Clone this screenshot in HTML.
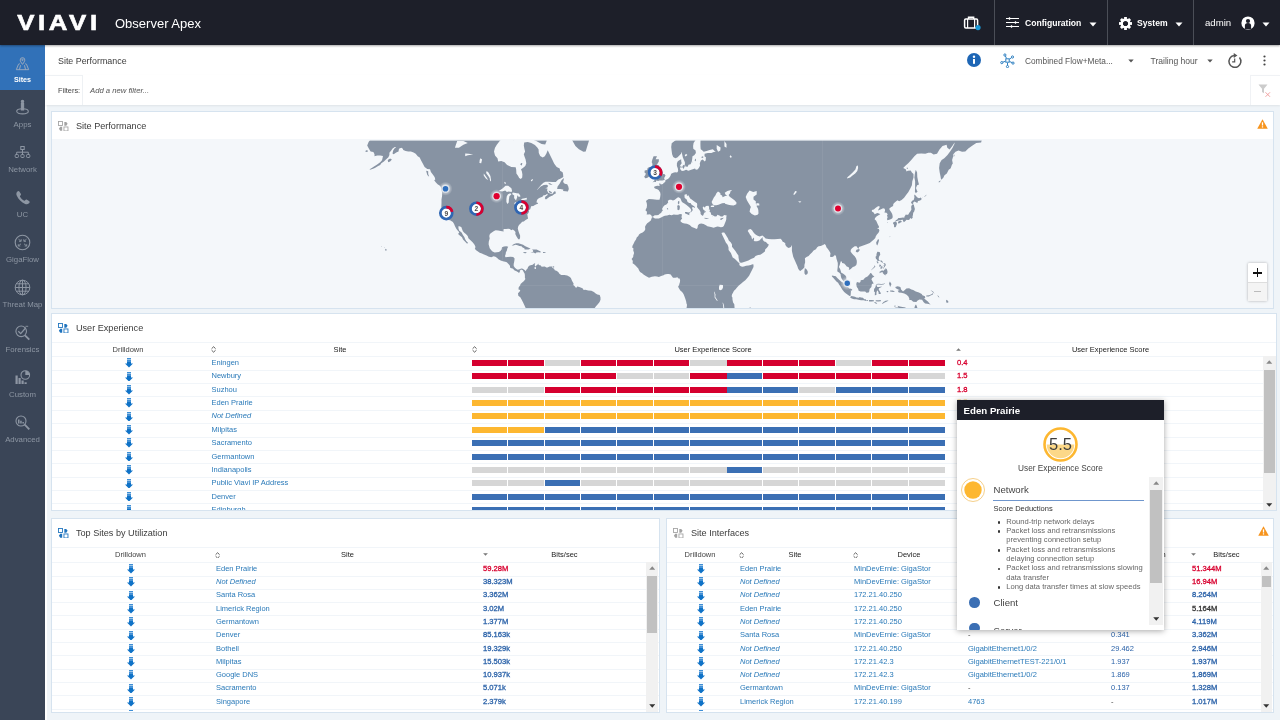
<!DOCTYPE html>
<html lang="en"><head><meta charset="utf-8"><title>Observer Apex - Site Performance</title>
<style>
*{box-sizing:border-box}
html,body{margin:0;padding:0}
body{width:1280px;height:720px;overflow:hidden;position:relative;background:#eff4f8;font-family:"Liberation Sans",Arial,sans-serif;font-size:7.5px;color:#444;-webkit-font-smoothing:antialiased}
.abs,.t{position:absolute;white-space:nowrap}
.t{line-height:10px;margin-top:-5px}
#hdr,#side,#tbar,#fbar,.panel,.tip{will-change:transform}
#hdr{position:absolute;left:0;top:0;width:1280px;height:45px;background:#1d1f29;box-shadow:0 1px 2px rgba(0,0,0,.35);z-index:5;color:#fff}
#hdr .sep{position:absolute;top:0;width:1px;height:45px;background:#4b4e57}
#hdr .m{font-size:8.6px;font-weight:700;color:#fff}
#side{position:absolute;left:0;top:45px;width:45px;height:675px;background:#3a4557}
#side .it{position:absolute;left:0;width:45px;height:45px;color:#8d96a3;font-size:7.8px;text-align:center}
#side .it.on{background:#3171b8;color:#fff;font-weight:700;font-size:7.200px}
#side .it span{position:absolute;left:-10px;width:65px;top:29.800px;line-height:10px;text-align:center}
#side .it svg{position:absolute;left:14px;top:9px}
#tbar{position:absolute;left:45px;top:45px;width:1235px;height:30px;background:#fff}
#fbar{position:absolute;left:45px;top:75px;width:1235px;height:30px;background:#fff;box-shadow:0 1px 2px rgba(0,0,0,.07)}
.panel{position:absolute;background:#fff;border:1px solid #d6e3ef;overflow:hidden}
.ptitle{position:absolute;left:24px;top:13.5px;font-size:9.1px;color:#3b3b3b;line-height:10px;margin-top:-5px;white-space:nowrap}
.picon{position:absolute;left:6px;top:8.5px}
.hline{position:absolute;left:0;right:0;height:1px;background:#f1f5f9}
.th{position:absolute;font-size:7.500px;color:#444;line-height:10px;margin-top:-4.800px;white-space:nowrap;transform:translateX(-50%)}
.panel .t{margin-top:-5.100px}
.lk{color:#2a7ab9}
.num{color:#2c63a9;font-weight:400;font-size:7.600px;-webkit-text-stroke:.300px currentColor}
.red{color:#d8002f}
.ar{position:absolute;left:-4px;top:-4.800px}
.ic{position:absolute;line-height:0}
.ic svg{display:block}
.sb{position:absolute;background:#f1f1f1}
.sb .sba{position:absolute;left:50%;margin-left:-3.2px}
.sb .sbt{position:absolute;left:1px;right:1px;background:#c1c1c1}
.bar{position:absolute;height:6px}
.bar i{position:absolute;top:0;height:6px}
</style></head><body>

<div id="hdr">
<svg class="abs" style="left:17px;top:13px" width="84" height="19" viewBox="0 0 84 19"><text transform="scale(1.2,1)" x="0.200" y="17" letter-spacing="3" font-family="Liberation Sans, Arial, sans-serif" font-weight="700" font-size="21.500" fill="#fff" stroke="#fff" stroke-width=".6">VIAVI</text></svg>
<div class="t" style="left:115px;top:23.5px;font-size:13px;color:#fff">Observer Apex</div>
<svg class="abs" style="left:963px;top:15px" width="19" height="17" viewBox="0 0 19 17"><rect x="1.6" y="4" width="13" height="9" rx="1.2" fill="none" stroke="#fff" stroke-width="1.5"/><path d="M5.5 4V2.2h5.2V4" fill="none" stroke="#fff" stroke-width="1.4"/><path d="M4.6 4v9M11.6 4v9" stroke="#fff" stroke-width="1.2"/><circle cx="15" cy="12.6" r="2.6" fill="#1a9ad9"/></svg>
<div class="sep" style="left:994px"></div>
<svg class="abs" style="left:1006px;top:16px" width="13" height="13" viewBox="0 0 13 13"><path d="M0 2.500h13M0 6.500h13M0 10.500h13" stroke="#fff" stroke-width="1.100"/><path d="M3.500 1.200v2.600M9.500 5.200v2.600M5.500 9.200v2.600" stroke="#fff" stroke-width="1.300"/></svg>
<div class="t m" style="left:1025px;top:23px">Configuration</div>
<svg class="abs" style="left:1089px;top:22px" width="8" height="5" viewBox="0 0 8 5"><path d="M.5.5h7L4 4.5z" fill="#fff"/></svg>
<div class="sep" style="left:1107px"></div>
<svg class="abs" style="left:1118.500px;top:16.500px" width="13" height="13" viewBox="-7 -7 14 14"><g fill="#fff"><rect x="-1.5" y="-7" width="3" height="4" transform="rotate(0)"/><rect x="-1.5" y="-7" width="3" height="4" transform="rotate(45)"/><rect x="-1.5" y="-7" width="3" height="4" transform="rotate(90)"/><rect x="-1.5" y="-7" width="3" height="4" transform="rotate(135)"/><rect x="-1.5" y="-7" width="3" height="4" transform="rotate(180)"/><rect x="-1.5" y="-7" width="3" height="4" transform="rotate(225)"/><rect x="-1.5" y="-7" width="3" height="4" transform="rotate(270)"/><rect x="-1.5" y="-7" width="3" height="4" transform="rotate(315)"/></g><circle r="4.1" fill="none" stroke="#fff" stroke-width="2.6"/></svg>
<div class="t m" style="left:1137px;top:23px">System</div>
<svg class="abs" style="left:1175px;top:22px" width="8" height="5" viewBox="0 0 8 5"><path d="M.5.5h7L4 4.5z" fill="#fff"/></svg>
<div class="sep" style="left:1193px"></div>
<div class="t m" style="left:1205px;top:23px;font-weight:400;font-size:9.600px">admin</div>
<svg class="abs" style="left:1241px;top:16px" width="14" height="14" viewBox="0 0 14 14"><circle cx="7" cy="7" r="6.6" fill="#fff"/><circle cx="7" cy="5" r="2.1" fill="#1d1f29"/><path d="M3.9 13V9.6a3.1 2.6 0 0 1 6.2 0V13z" fill="#1d1f29"/></svg>
<svg class="abs" style="left:1262px;top:22px" width="8" height="5" viewBox="0 0 8 5"><path d="M.5.5h7L4 4.5z" fill="#fff"/></svg>
</div>
<div class="abs" style="left:45px;top:105px;width:2px;height:615px;background:#fff"></div>
<div id="side">
<div class="it on" style="top:0px"><svg width="15" height="15" viewBox="0 0 17 17" style="left:15px;top:10.500px" fill="none" stroke="#9ba9bd" stroke-width="1.1"><path d="M8.5 9.5C6.8 7.2 5.9 5.8 5.9 4.5a2.6 2.6 0 0 1 5.2 0c0 1.300-.9 2.700-2.600 5z"/><circle cx="8.5" cy="4.400" r=".8"/><path d="M5.5 8.800 4 9.300 1.500 15.500h14L13 9.300l-1.500-.5M6.300 10.500l-1.300 5M10.700 10.500l1.300 5"/></svg><span>Sites</span></div>
<div class="it" style="top:45px"><svg width="17" height="17" viewBox="0 0 17 17" fill="none" stroke="#8d96a3" stroke-width="1.1"><circle cx="8.500" cy="2.600" r="1.200" fill="#8d96a3"/><path d="M7.400 4.600h2.200v6.400H7.400z" fill="#8d96a3"/><ellipse cx="8.500" cy="12.300" rx="5.800" ry="2.600"/></svg><span>Apps</span></div>
<div class="it" style="top:90px"><svg width="17" height="17" viewBox="0 0 17 17" fill="none" stroke="#8d96a3" stroke-width="1"><rect x="6.800" y="2.500" width="3.400" height="3"/><path d="M8.500 5.500v2.700M2.700 10.500V8.200h11.600v2.300M8.500 8.200v2.300"/><rect x="1.200" y="10.500" width="3.200" height="3" rx=".8"/><rect x="6.900" y="10.500" width="3.200" height="3" rx=".8"/><rect x="12.600" y="10.500" width="3.200" height="3" rx=".8"/></svg><span>Network</span></div>
<div class="it" style="top:135px"><svg width="17" height="17" viewBox="0 0 17 17"><path d="M3.200 2.800c.8-.9 1.700-1 2.300-.1l1.300 2c.4.700.2 1.300-.4 1.800-.5.400-.6.800-.2 1.500.9 1.500 2 2.600 3.600 3.500.6.300 1 .2 1.400-.3.500-.6 1.100-.8 1.800-.4l2 1.200c.9.600.9 1.500 0 2.300-1.100 1-2.400 1.200-3.900.6C7.500 13.400 4.300 10.300 2.700 6.600 2.100 5.100 2.300 3.800 3.200 2.800z" fill="#8d96a3"/></svg><span>UC</span></div>
<div class="it" style="top:180px"><svg width="17" height="17" viewBox="0 0 17 17" fill="none" stroke="#8d96a3" stroke-width="1.1"><circle cx="8.500" cy="8.500" r="7.300"/><path d="M4.500 5.200 7 7.200M12.500 5.200 10 7.200M4.500 11.800 7 9.800M12.500 11.800 10 9.800M5 7.300h2.200V5.200M12 7.300H9.800V5.200M4.300 10.200v1.800h2M12.700 10.200v1.800h-2" stroke-width=".9"/></svg><span>GigaFlow</span></div>
<div class="it" style="top:225px"><svg width="17" height="17" viewBox="0 0 17 17" fill="none" stroke="#8d96a3" stroke-width="1"><circle cx="8.500" cy="8.500" r="7.300"/><ellipse cx="8.500" cy="8.500" rx="3.600" ry="7.300"/><path d="M8.500 1.200v14.600M1.200 8.500h14.600M2.300 4.800h12.400M2.300 12.200h12.400"/></svg><span>Threat Map</span></div>
<div class="it" style="top:270px"><svg width="17" height="17" viewBox="0 0 17 17" fill="none" stroke="#8d96a3" stroke-width="1.1"><circle cx="7.200" cy="7.300" r="5.300"/><path d="M4.300 7.300 6.700 9.600 11.800 3.800" stroke-width="1.300"/><path d="M11 11.300 15.300 15.600" stroke-width="1.800"/><path d="M11.500 2.300h2.700" stroke-width=".9"/></svg><span>Forensics</span></div>
<div class="it" style="top:315px"><svg width="17" height="17" viewBox="0 0 17 17"><g fill="#8d96a3"><rect x="1.500" y="6.500" width="2.200" height="8.500"/><rect x="4.500" y="9" width="2.200" height="6"/><rect x="7.500" y="11.500" width="2.200" height="3.500"/><rect x="10.500" y="13.300" width="2.200" height="1.700"/></g><circle cx="11.300" cy="6" r="4.300" fill="none" stroke="#8d96a3" stroke-width="1.100"/><path d="M11.300 6V1.700A4.300 4.300 0 0 1 15.600 6z" fill="#8d96a3"/></svg><span>Custom</span></div>
<div class="it" style="top:360px"><svg width="17" height="17" viewBox="0 0 17 17" fill="none" stroke="#8d96a3" stroke-width="1.100"><circle cx="7" cy="7" r="5"/><path d="M10.700 10.700 15.300 15.300" stroke-width="1.900"/><path d="M4 9.500V5.500h1.500v4zM6.200 9.500V6.800h1.500v2.700zM8.400 9.500V8h1.500v1.500z" fill="#8d96a3" stroke="none"/></svg><span>Advanced</span></div>
</div>
<div id="tbar"><div class="t" style="left:13px;top:15.500px;font-size:8.900px;color:#3b3b3b">Site Performance</div>
<svg class="abs" style="left:922px;top:8px" width="14" height="14" viewBox="0 0 14 14"><circle cx="7" cy="7" r="7" fill="#1e66b5"/><rect x="6" y="6" width="2" height="4.800" fill="#fff"/><circle cx="7" cy="3.800" r="1.200" fill="#fff"/></svg>
<svg class="abs" style="left:955px;top:8px" width="15" height="15" viewBox="-7.500 -7.500 15 15" fill="none" stroke="#2d7fc1" stroke-width="1"><rect x="-1.700" y="-1.700" width="3.400" height="3.400"/><path d="M-1.0 -2.1L-2.1 -4.5"/><circle cx="-2.6" cy="-5.5" r="1.100"/><path d="M1.9 -1.3L4.1 -2.9"/><circle cx="5.0" cy="-3.5" r="1.100"/><path d="M2.1 1.0L4.5 2.1"/><circle cx="5.5" cy="2.6" r="1.100"/><path d="M0.0 2.3L0.0 5.0"/><circle cx="0.0" cy="6.1" r="1.100"/><path d="M-2.2 0.8L-4.7 1.7"/><circle cx="-5.7" cy="2.1" r="1.100"/></svg>
<div class="t" style="left:980px;top:15.500px;font-size:8.300px;color:#555">Combined Flow+Meta...</div>
<svg class="abs" style="left:1083px;top:14px" width="6" height="4" viewBox="0 0 6 4"><path d="M.3.500h5.400L3 3.500z" fill="#555"/></svg>
<div class="t" style="left:1105.500px;top:15.500px;font-size:8.550px;color:#555">Trailing hour</div>
<svg class="abs" style="left:1162px;top:14px" width="6" height="4" viewBox="0 0 6 4"><path d="M.3.500h5.400L3 3.500z" fill="#555"/></svg>
<svg class="abs" style="left:1181.800px;top:6.500px" width="16" height="17" viewBox="0 0 15 16" fill="none" stroke="#555" stroke-width="1.400"><path d="M11.700 5.200A5.600 5.600 0 1 1 6.500 3.300"/><path d="M6.300 1 9.800 3.300 6.300 5.700z" fill="#555" stroke="none"/><path d="M7.200 6v3.300H4.800" stroke-width="1.100"/></svg>
<svg class="abs" style="left:1218px;top:10px" width="3" height="11" viewBox="0 0 3 11"><circle cx="1.500" cy="1.500" r="1.100" fill="#444"/><circle cx="1.500" cy="5.500" r="1.100" fill="#444"/><circle cx="1.500" cy="9.500" r="1.100" fill="#444"/></svg>
</div>
<div id="fbar"><div class="abs" style="left:0;top:0;width:38px;height:30px;border-right:1px solid #eef1f4;border-top:1px solid #eef1f4"></div>
<div class="t" style="left:13px;top:15.600px;font-size:7.400px;color:#444">Filters:</div>
<div class="t" style="left:45px;top:15.600px;font-size:7.700px;color:#555;font-style:italic">Add a new filter...</div>
<div class="abs" style="left:1205px;top:0;width:30px;height:30px;border-left:1px solid #f0f2f5;border-top:1px solid #f0f2f5"></div>
<svg class="abs" style="left:1213px;top:9px" width="16" height="15" viewBox="0 0 16 15"><path d="M.5.500h9L6 4.800v4.500L4 8V4.800z" fill="#ccc"/><path d="M7.500 8.300 12 12.800M12 8.300 7.500 12.800" stroke="#f19a9a" stroke-width=".9"/></svg>
</div>
<div class="panel" style="left:51px;top:111px;width:1223px;height:198px">
<span class="picon"><svg viewBox="0 0 12 12" width="10.5" height="10.5"><rect x=".6" y=".6" width="4.6" height="4.6" fill="none" stroke="#a3a3a3" stroke-width="1"/><rect x="6.8" y="6.8" width="4.6" height="4.6" fill="none" stroke="#a3a3a3" stroke-width="1"/><path d="M7.2 1h2.2L11 3.2 9.4 5.4H7.2z" fill="#a3a3a3"/><path d="M4.8 6.6H2.6L1 8.8l1.6 2.2h2.2z" fill="#a3a3a3"/></svg></span><div class="ptitle">Site Performance</div>
<span class="ic" style="left:1205px;top:7px"><svg viewBox="0 0 12 11" width="11" height="10"><path d="M6 .3 11.8 10.6H.2z" fill="#f7941d"/><rect x="5.3" y="3.6" width="1.4" height="3.6" fill="#fff"/><rect x="5.3" y="8" width="1.4" height="1.4" fill="#fff"/></svg></span>
<div class="abs" style="left:0;top:27px;width:1221px;height:169px;background:#f4f7fa" id="map">
<svg class="abs" style="left:0;top:1px" width="1221" height="168" viewBox="0 0 1221 168"><path d="M315.4 -21.3L315.4 -5.9L317.5 -1.8L317.9 0.2L316.6 2.1L315.2 5.5L316.8 8.5L318.6 11.4L321.4 12.1L322.5 14.2L322.5 16.2L325.2 15.5L328.2 15.5L331.0 15.9L330.5 18.3L330.0 20.3L328.2 22.2L324.8 24.8L322.0 26.4L319.8 27.9L317.7 29.2L317.9 29.8L320.4 28.9L322.9 27.9L326.1 26.1L328.2 25.1L329.3 23.2L331.9 21.6L334.2 19.3L336.4 17.3L337.4 14.9L337.4 12.8L339.2 10.6L340.6 8.5L342.8 7.0L344.2 7.4L342.4 8.5L341.2 10.6L340.5 13.5L341.7 14.2L344.2 12.4L346.5 11.4L347.0 8.8L349.2 7.7L350.6 8.5L351.3 9.9L353.6 11.0L356.3 11.4L358.9 11.4L361.6 12.4L363.7 13.8L365.7 16.2L367.7 17.6L369.1 20.6L370.9 23.8L372.6 27.0L375.3 28.9L378.0 29.2L378.9 31.9L380.8 34.6L382.6 36.9L383.3 39.5L382.2 40.3L383.7 42.3L385.6 44.2L387.9 45.8L388.8 46.9L389.3 49.3L390.1 52.4L390.1 55.7L389.5 59.4L389.5 63.1L389.3 66.9L390.4 69.4L391.7 71.7L392.7 73.0L393.6 75.1L394.5 76.8L395.7 78.6L396.1 80.1L398.1 80.3L399.7 81.2L400.9 82.0L402.1 83.9L403.0 86.2L404.3 88.7L405.7 90.6L407.3 92.2L406.1 94.0L407.8 95.6L410.0 97.2L411.0 99.6L412.5 101.1L414.4 102.9L415.1 103.7L416.0 102.7L414.2 101.1L413.2 99.2L412.3 97.0L410.9 95.0L409.6 92.6L407.1 90.4L406.4 87.9L406.6 86.0L409.3 86.9L410.0 89.1L410.9 91.2L412.5 93.0L413.9 94.0L415.7 96.0L416.4 98.2L418.5 100.2L420.6 102.3L422.2 104.2L423.3 106.2L423.3 107.9L422.8 108.6L423.8 110.1L425.6 111.3L427.7 112.8L429.9 113.5L432.0 114.6L434.5 115.6L437.0 116.7L439.3 117.2L441.6 116.3L443.4 116.7L445.2 118.0L446.4 119.3L448.7 120.5L450.9 121.3L453.2 121.8L454.8 122.2L456.0 123.5L457.4 124.9L458.0 126.0L458.0 127.5L459.4 128.2L460.6 128.5L461.7 129.4L462.6 130.5L464.0 131.1L465.4 131.8L466.7 132.7L468.1 132.1L467.6 130.9L469.0 129.6L470.8 130.3L471.3 131.2L471.8 132.3L472.7 133.7L472.9 135.5L472.9 137.8L473.4 138.9L472.0 140.9L470.2 142.5L468.6 143.9L468.1 145.5L466.7 147.3L466.5 149.4L468.3 149.9L467.7 151.5L466.0 153.2L466.3 155.8L468.3 157.3L469.7 159.8L471.1 162.5L472.4 165.2L473.4 167.4L474.9 170.3L478.9 174.3L485.7 181.8L539.4 181.8L540.3 178.0L541.2 174.3L541.2 171.6L542.1 168.8L543.8 166.6L545.8 164.3L547.6 161.9L548.5 159.8L548.5 157.6L547.7 154.9L545.4 154.4L543.7 153.5L541.9 152.1L539.4 150.7L536.2 150.5L533.3 149.8L531.7 150.1L530.5 148.3L527.3 147.1L525.2 146.6L524.1 148.0L522.5 146.0L521.3 145.0L521.6 143.4L520.7 142.1L519.8 140.2L518.9 138.0L517.5 136.8L515.2 135.5L512.4 135.0L509.2 135.0L507.4 133.7L506.3 131.9L504.4 130.7L502.8 130.2L502.1 128.7L499.9 127.6L500.5 126.4L497.6 126.5L495.5 127.5L494.4 127.5L492.8 126.5L489.6 126.7L488.9 125.5L486.8 124.9L486.1 123.6L485.5 124.7L484.3 125.6L483.2 126.5L482.7 125.1L483.2 123.3L482.1 123.6L480.7 124.7L478.6 125.3L477.2 125.8L476.1 127.1L475.4 128.7L474.1 130.0L474.0 131.2L472.9 130.2L470.8 128.7L469.2 128.4L467.6 129.3L465.8 129.8L464.4 129.1L462.9 127.8L461.7 126.0L461.7 124.0L462.1 122.2L462.4 120.4L462.6 118.5L461.2 117.0L458.5 116.7L455.8 117.0L453.5 117.2L453.0 116.1L453.7 114.1L453.9 112.2L454.8 110.7L455.3 108.6L456.2 106.7L454.4 106.2L451.9 106.5L450.0 107.3L449.6 109.4L448.4 111.1L446.9 112.0L444.8 112.2L442.7 112.6L440.5 111.6L439.5 110.5L437.7 108.3L437.2 106.2L436.6 104.2L436.8 101.5L437.7 98.6L437.3 96.0L437.9 94.0L439.8 92.4L442.0 91.0L443.7 90.2L446.2 90.4L448.7 91.0L450.1 91.2L451.7 91.6L451.4 90.2L451.7 88.9L454.1 88.9L456.2 88.7L458.0 89.1L459.0 90.2L460.8 89.5L462.2 90.4L463.5 92.0L463.3 94.0L464.4 96.2L465.3 97.8L466.3 99.2L467.6 99.2L468.1 97.6L468.1 95.6L467.2 93.2L466.5 91.2L465.8 88.7L466.1 86.7L467.0 85.0L468.6 83.5L470.2 81.8L471.8 81.4L473.6 79.9L474.9 79.2L476.1 78.4L475.7 76.8L475.4 74.8L474.9 73.5L475.6 74.2L477.0 71.7L476.8 70.1L478.2 69.2L478.9 67.1L479.1 66.2L481.3 65.9L482.5 65.2L483.4 64.7L485.0 64.0L486.1 63.8L485.7 62.8L484.5 62.4L484.8 60.7L485.7 59.0L487.8 57.7L490.5 56.7L491.2 55.5L493.5 55.0L495.3 53.7L495.7 55.0L493.5 56.5L492.8 58.2L493.9 59.4L496.0 58.0L497.6 56.7L500.6 55.5L502.1 54.2L504.0 53.2L503.1 50.9L501.7 51.9L500.6 53.7L498.5 53.7L496.2 52.7L495.1 50.6L495.5 48.5L493.2 48.2L495.3 47.4L496.2 45.8L494.6 44.7L491.7 45.0L488.7 46.4L486.6 48.5L484.8 50.6L485.5 49.3L487.1 47.2L489.3 44.7L491.4 42.8L493.5 41.7L496.7 41.7L500.3 42.0L503.8 42.0L506.0 39.8L509.2 38.3L511.3 36.9L511.1 34.3L510.6 32.2L508.1 30.7L507.7 28.5L504.7 27.0L502.1 23.5L500.6 20.3L499.0 16.9L497.3 13.5L495.7 10.3L494.4 13.5L492.8 16.2L490.7 17.6L488.2 15.9L486.8 13.1L486.6 9.6L485.3 7.4L482.9 5.1L479.3 2.9L475.7 2.1L472.2 2.5L471.8 5.5L472.4 8.8L473.1 11.4L471.8 14.2L472.5 16.6L473.6 19.6L474.3 23.2L473.3 26.1L470.9 27.9L469.0 29.2L469.9 31.6L470.4 34.6L470.2 37.5L468.8 38.9L467.2 38.1L466.0 35.7L464.4 33.4L464.2 29.8L463.7 27.3L459.4 27.0L455.1 25.1L452.6 22.2L449.3 20.9L446.2 21.6L445.5 18.3L443.0 15.5L442.0 11.4L443.0 7.7L444.8 4.8L446.9 2.1L449.4 -1.0L452.3 -3.8L454.1 -21.3ZM511.8 38.1L509.5 40.3L507.6 43.7L505.6 46.6L505.1 49.0L508.3 49.0L511.3 49.6L511.1 51.1L515.9 51.4L516.8 49.0L516.3 46.4L515.2 44.2L512.7 43.7L511.1 42.0L511.7 39.8ZM518.1 -21.3L517.7 -7.9L520.2 0.2L523.4 5.9L526.9 9.2L531.4 11.7L533.7 11.4L534.8 7.7L537.1 0.2L539.4 -7.9L548.3 -21.3ZM459.6 105.6L462.1 104.0L464.2 103.3L466.5 103.3L468.8 104.0L471.1 104.8L472.9 106.0L475.0 106.9L477.2 107.9L478.6 108.8L476.3 109.4L472.7 109.4L472.2 108.1L470.9 107.7L469.5 106.3L467.4 106.0L465.6 105.2L463.3 104.8L461.5 105.4ZM480.0 109.6L482.5 109.4L484.6 109.6L486.6 110.5L488.7 111.5L488.5 112.6L486.4 112.2L484.3 112.6L483.4 113.5L481.6 112.6L478.4 112.4L481.1 111.8L481.1 110.5ZM471.3 112.2L473.3 112.0L474.9 112.8L473.6 113.3L471.5 113.0ZM491.0 112.0L493.7 112.2L493.3 113.0L491.0 113.0ZM501.0 126.2L502.2 126.4L502.1 127.5L500.6 127.5ZM333.3 108.8L334.9 109.8L333.9 111.1L333.2 110.1ZM329.3 106.0L330.1 106.7L329.4 106.7ZM332.1 107.5L333.2 107.7L332.5 108.1ZM338.1 18.6L339.9 19.6L338.1 21.6L336.2 22.2L335.7 19.9ZM314.0 10.3L315.9 10.6L315.4 12.1L313.3 11.7ZM305.6 -2.6L310.1 -1.4L309.2 -0.2L305.6 -0.6ZM374.1 30.7L376.2 31.3L376.2 34.0L377.4 36.9L375.3 34.9ZM471.8 -21.3L471.8 -5.9L474.5 -3.8L478.9 -1.0L484.3 0.9L489.6 4.0L493.2 4.4L494.6 0.9L494.9 -3.0L496.7 -7.9L498.5 -21.3ZM455.8 -7.9L455.8 -3.8L457.6 -1.0L461.2 0.2L464.7 -1.4L466.5 -5.9L461.2 -10.1ZM496.0 42.8L498.5 43.4L500.6 45.0L497.6 44.5ZM496.7 50.6L500.1 52.2L499.2 53.2L497.1 52.2ZM469.0 22.9L470.4 23.2L469.7 25.4L468.3 24.8ZM649.6 -21.3L650.5 -10.9L654.1 -10.9L655.5 -7.9L653.2 -5.0L650.5 -2.2L648.5 0.2L648.4 4.0L648.5 7.0L648.7 9.2L650.1 10.3L651.7 11.7L654.6 11.0L657.6 9.9L660.8 9.2L663.1 11.4L664.2 11.7L661.7 12.1L659.4 13.1L655.8 13.1L652.6 13.8L652.5 16.2L653.9 17.3L653.7 20.3L652.8 21.6L650.7 19.6L648.9 20.6L647.8 23.2L648.0 25.7L646.8 27.9L645.5 29.5L643.9 29.8L643.0 28.5L640.0 29.5L636.3 30.7L634.1 29.8L631.8 30.7L629.9 31.0L628.6 29.8L628.1 28.5L627.9 26.1L628.8 24.5L629.7 23.2L629.2 21.2L629.2 19.3L627.7 19.9L625.8 21.2L624.9 23.2L624.9 26.1L625.8 28.2L626.1 30.1L626.1 31.3L625.1 32.5L623.1 32.2L621.2 32.8L619.2 33.7L618.5 35.7L617.6 37.2L616.5 38.6L614.9 39.5L613.5 40.0L613.2 42.0L611.9 42.8L610.9 43.9L608.9 44.5L608.2 43.4L607.1 43.4L607.7 46.1L605.2 45.8L602.5 46.4L602.1 47.4L603.0 48.5L605.3 49.3L606.6 50.1L608.2 52.4L608.5 54.5L608.2 57.0L607.5 59.7L604.8 59.7L600.7 59.2L596.8 59.0L595.2 59.9L594.0 60.9L594.7 63.1L595.0 65.2L594.7 67.8L593.8 69.2L593.6 70.8L594.9 71.5L594.9 73.5L594.6 74.6L596.3 74.6L597.5 74.2L599.1 75.1L599.8 76.4L600.5 76.8L601.1 76.4L602.7 75.3L604.5 75.3L606.4 75.1L608.0 73.5L609.1 73.0L609.8 71.5L610.9 70.6L610.0 68.9L611.4 66.6L612.6 65.2L614.4 64.5L616.2 62.6L615.8 60.7L617.6 59.7L619.2 59.7L621.0 60.4L622.8 59.7L624.0 58.7L625.6 57.5L626.5 57.2L628.3 58.2L629.0 59.7L629.5 61.2L630.6 62.4L632.4 63.6L634.5 65.0L635.7 65.9L637.2 67.3L638.6 68.7L639.3 70.3L638.4 71.9L638.9 72.6L640.0 71.0L640.9 70.1L640.2 68.7L640.4 67.1L641.1 66.9L642.5 67.8L643.2 68.3L642.5 66.4L640.5 65.2L638.9 64.0L639.1 63.3L637.3 63.1L635.6 61.9L634.7 59.4L632.7 58.0L632.5 56.0L632.5 54.7L634.7 54.0L634.7 55.0L635.2 56.2L636.1 55.0L637.2 56.7L638.2 58.5L639.7 59.4L641.3 60.7L643.0 61.9L645.0 63.3L645.2 64.7L645.0 66.9L646.1 68.5L647.5 70.1L648.2 71.5L648.7 71.9L648.4 73.0L648.9 74.6L649.6 75.1L650.5 75.9L651.2 74.8L651.6 75.7L651.6 73.9L652.1 73.3L652.6 72.6L653.3 72.1L652.1 70.8L651.7 70.1L651.2 69.2L650.7 67.8L651.2 66.4L652.6 67.3L652.8 68.0L653.2 66.9L653.9 65.9L656.4 65.7L656.9 66.4L657.1 67.6L657.1 68.9L658.1 70.1L657.4 71.5L658.9 72.8L659.0 74.6L660.6 75.3L662.9 76.4L664.7 76.2L665.3 74.8L667.4 75.5L668.8 76.6L670.6 76.4L672.2 75.1L674.7 75.5L674.3 77.0L674.3 79.0L674.0 80.5L673.1 82.7L672.5 84.3L671.8 86.0L670.6 87.1L668.8 87.3L667.0 86.7L665.4 86.4L663.7 87.1L661.7 87.7L659.0 86.9L655.3 86.2L654.4 85.4L651.6 84.1L649.1 83.5L647.1 84.1L645.9 85.6L645.5 87.9L644.6 88.9L642.5 87.9L639.8 86.9L637.7 85.0L634.9 83.7L632.7 83.5L630.6 82.9L628.6 81.6L628.6 80.3L630.2 78.6L629.5 77.3L629.7 75.7L630.1 74.4L628.1 73.9L626.0 74.8L623.8 74.8L621.7 74.6L619.6 75.3L617.4 74.8L615.1 75.5L612.8 75.7L611.0 76.6L609.1 77.5L606.9 78.6L605.2 78.4L602.9 78.6L601.0 77.3L600.0 77.3L599.5 78.6L598.8 80.5L597.0 82.0L595.2 83.3L594.1 84.8L593.1 86.4L593.1 88.3L593.4 89.1L592.4 91.0L590.6 92.4L588.3 93.6L587.0 94.4L586.3 96.0L584.7 97.4L584.0 99.6L582.6 101.5L581.7 103.5L580.5 105.8L580.2 107.5L581.5 108.4L581.2 110.3L582.1 113.0L581.3 115.4L581.2 117.0L579.6 118.9L580.6 120.4L580.8 121.5L580.6 123.3L582.1 124.2L583.5 125.6L585.1 127.3L586.3 128.5L587.0 130.3L588.1 131.9L590.1 133.2L591.5 134.5L593.8 136.1L597.0 137.7L599.8 136.8L603.0 136.2L605.0 136.4L606.9 137.0L609.1 136.1L611.6 135.2L612.6 134.6L615.1 134.1L616.9 134.1L618.7 134.6L619.7 136.1L621.0 137.8L623.3 137.7L625.4 137.3L626.5 138.4L627.6 138.6L628.1 140.3L627.9 142.3L627.4 143.7L627.2 144.8L626.1 146.7L627.2 148.7L628.3 150.5L630.1 152.1L631.5 154.0L632.4 156.2L633.4 158.9L634.1 161.2L634.5 163.4L635.0 164.8L634.7 167.5L632.7 170.3L631.8 173.4L631.5 176.5L633.6 181.8L672.7 181.8L675.6 179.0L678.8 176.5L681.4 174.7L682.9 172.5L682.7 169.7L682.5 167.0L682.3 164.3L681.1 162.5L680.5 159.8L680.4 157.6L679.7 156.2L680.0 154.4L681.1 152.6L682.0 150.8L683.4 149.4L685.0 147.6L686.8 145.5L689.3 143.4L691.0 141.9L693.3 140.2L695.5 137.8L697.1 135.7L698.5 133.0L699.9 130.3L701.0 128.0L701.5 126.9L701.5 124.4L700.5 124.2L698.7 125.1L696.5 125.5L694.1 125.8L691.9 126.5L690.1 126.7L688.4 126.0L687.3 124.9L687.5 123.3L686.2 122.2L684.5 120.4L682.7 118.7L680.7 117.4L680.0 115.8L678.9 113.0L676.6 110.0L676.5 107.3L675.6 104.8L673.8 102.5L672.7 100.0L671.5 97.6L670.4 95.2L669.5 93.0L670.8 92.4L672.2 92.6L673.3 94.0L674.5 96.0L675.9 98.2L676.8 100.6L678.9 102.5L680.0 104.6L680.0 106.7L681.6 108.8L683.4 111.1L684.8 113.3L686.4 115.6L686.6 118.0L687.1 120.4L687.7 122.6L689.6 122.7L691.2 122.2L693.5 121.5L696.4 120.4L699.0 118.9L702.1 117.8L703.5 116.1L706.1 115.0L708.3 114.8L710.6 113.3L712.9 111.5L713.3 109.2L714.7 108.1L716.1 106.2L716.8 104.4L715.2 103.5L714.0 102.1L712.2 101.5L710.9 100.0L710.6 98.4L710.8 97.0L709.9 98.0L708.8 99.0L707.4 100.4L705.1 101.3L702.6 101.3L701.7 100.4L702.2 99.0L701.7 97.4L700.8 98.4L700.5 99.6L699.7 98.2L699.4 96.4L698.0 94.8L696.9 92.8L695.7 91.0L696.7 89.5L698.7 89.1L700.3 90.4L701.2 92.0L702.9 94.0L705.1 95.6L707.6 96.4L710.4 95.4L712.2 97.0L713.6 98.4L716.5 99.0L719.5 99.2L722.5 99.2L725.7 99.0L728.5 98.8L729.8 100.0L730.7 101.7L732.1 102.3L733.5 103.7L733.2 104.8L734.9 106.9L736.7 107.9L738.9 106.9L739.4 105.0L739.9 106.7L739.9 108.8L739.9 111.1L740.6 113.9L741.2 116.7L742.2 118.9L743.3 121.6L744.4 124.0L745.4 126.2L746.1 128.5L747.2 130.3L748.3 131.1L749.5 130.0L750.9 129.1L752.4 127.3L752.4 124.9L753.1 122.6L753.1 120.4L752.9 118.2L754.5 116.9L756.6 115.9L758.1 114.3L760.0 112.4L761.6 110.5L763.9 109.2L765.2 107.3L766.6 106.2L768.7 106.0L771.0 105.0L772.8 104.0L773.9 105.4L774.4 107.3L775.7 108.8L777.3 111.1L778.5 113.3L778.1 115.8L778.3 116.9L780.3 117.0L782.1 115.9L782.9 114.8L784.0 116.3L784.4 118.5L785.1 120.7L785.8 123.1L785.8 125.8L785.6 128.0L785.3 130.3L785.4 131.6L787.4 132.7L788.6 134.3L788.8 136.1L789.3 138.0L790.4 139.8L791.7 141.2L793.3 142.5L794.7 143.2L795.7 143.0L795.2 141.2L794.3 139.1L794.3 137.0L793.4 135.5L792.2 134.5L790.9 133.4L789.3 132.7L788.6 130.5L788.1 129.1L786.9 127.1L787.7 124.9L788.3 122.9L788.6 121.5L789.9 121.5L790.1 122.9L792.2 123.5L793.6 124.9L794.7 126.5L796.3 126.9L797.2 128.0L796.8 130.0L798.8 128.9L800.0 127.8L800.9 126.9L802.9 126.2L804.3 124.9L804.8 123.1L804.8 120.7L804.1 118.5L802.9 116.5L801.1 114.8L799.8 113.3L798.6 111.6L798.8 109.8L800.0 108.3L801.3 107.3L802.7 106.3L804.5 106.2L805.5 107.7L806.1 108.6L806.9 108.4L806.9 106.9L809.1 106.2L811.2 105.6L813.3 104.8L815.3 104.0L817.8 102.9L820.1 101.1L821.9 99.6L823.3 98.0L823.7 96.4L824.9 94.6L826.5 92.8L827.4 90.8L826.9 89.1L824.9 88.9L826.7 87.9L827.0 86.4L826.1 85.0L825.3 83.3L824.2 80.7L822.6 79.2L823.3 77.7L824.5 76.6L826.9 75.1L828.3 74.2L827.0 73.5L825.3 73.0L822.6 74.2L821.9 72.8L819.9 71.5L819.9 69.9L821.9 69.6L823.5 68.0L825.6 66.4L827.2 65.9L827.7 67.3L826.5 69.2L826.0 70.6L828.5 69.6L831.1 68.3L832.7 68.7L833.1 70.6L832.4 72.4L834.5 72.8L835.7 74.2L835.0 75.5L835.6 77.3L835.0 79.0L835.4 80.3L837.3 79.7L839.3 79.0L840.5 77.9L840.7 76.2L840.2 73.9L839.1 71.9L837.7 70.1L837.2 68.7L838.9 67.3L841.1 65.9L841.3 64.0L842.7 62.4L843.9 61.4L845.5 60.2L847.1 61.2L849.6 59.9L852.1 57.7L854.1 55.0L856.4 51.9L858.3 48.5L859.9 45.3L860.3 41.2L861.5 37.5L861.5 34.0L859.9 32.5L858.7 30.4L855.8 30.7L854.6 31.6L853.7 29.2L851.2 27.9L853.7 25.4L856.5 22.9L859.7 19.6L862.4 16.2L865.1 13.8L869.2 13.5L873.3 13.8L876.3 12.8L878.9 12.8L881.6 14.5L885.0 13.8L887.5 9.6L890.5 5.9L894.6 4.8L895.3 7.7L897.6 9.6L900.3 5.9L902.6 2.5L902.4 4.0L900.6 7.7L898.1 11.4L895.5 14.9L892.3 18.3L889.6 19.9L887.7 23.2L887.1 27.9L887.7 32.5L888.5 36.3L889.1 39.8L891.2 38.1L892.5 35.2L894.8 33.4L896.7 29.8L898.7 28.2L899.9 24.8L900.8 23.5L900.1 19.9L901.0 16.9L901.3 14.2L903.5 11.7L906.5 10.6L910.1 11.7L913.3 11.4L916.3 8.5L920.5 5.5L924.3 2.9L929.1 2.5L930.3 -1.8L930.5 -21.3ZM631.8 -21.3L630.1 -7.9L626.5 -1.8L622.6 0.9L619.7 3.3L619.2 7.0L619.6 10.6L620.1 14.2L621.2 16.9L623.3 18.3L625.3 17.6L627.6 15.2L629.0 13.8L629.5 11.7L630.1 14.2L630.8 17.3L631.7 19.6L632.9 22.2L632.9 24.2L633.4 26.4L635.7 26.7L636.5 24.8L638.6 24.2L639.8 21.6L640.2 18.9L640.5 16.2L642.3 15.2L643.9 13.1L643.6 10.6L641.3 8.8L641.1 5.9L641.6 2.9L643.4 0.2L646.9 -3.0L648.7 -7.9L649.6 -21.3ZM601.6 16.2L605.0 16.2L603.6 19.3L606.9 19.3L606.8 21.6L605.5 23.8L604.5 24.8L606.6 25.1L607.8 27.9L609.3 29.5L610.5 31.9L611.0 34.0L612.8 34.3L613.5 35.4L612.6 37.2L611.9 38.6L613.0 38.9L612.1 40.0L610.5 40.6L607.3 40.6L606.1 40.9L604.3 40.6L603.9 42.0L602.0 41.7L600.5 42.6L601.6 41.2L602.9 39.8L604.8 39.2L605.2 38.3L603.4 38.3L601.3 37.8L602.1 36.6L603.2 35.2L602.5 34.3L602.5 33.1L605.0 33.1L605.3 31.0L604.3 29.2L604.3 27.9L601.8 28.9L602.0 27.0L601.6 25.4L600.4 26.7L600.4 23.8L599.7 22.2L600.2 19.9L601.1 17.6ZM597.5 27.0L599.5 27.3L600.5 29.2L599.7 31.0L599.7 33.1L599.3 35.7L597.2 36.6L595.0 38.1L593.1 38.3L592.2 36.6L593.3 35.2L593.8 33.4L592.5 32.5L592.7 30.4L595.2 30.1L595.6 27.9ZM632.4 24.5L632.9 26.1L632.0 27.9L631.5 28.9L630.2 27.0L630.9 25.4ZM628.8 26.1L629.7 27.0L629.2 27.9L627.9 27.0ZM643.9 18.6L644.1 20.3L643.0 21.6L642.7 19.9ZM640.9 20.6L640.4 22.5L639.7 24.2ZM650.1 16.2L651.7 16.9L650.0 18.3L649.4 17.3ZM627.2 60.7L627.4 62.8L626.9 64.5L625.8 63.3L626.0 61.6ZM627.0 65.0L627.9 66.6L627.6 69.6L626.1 70.3L625.4 69.6L625.4 67.1L625.1 65.7ZM638.2 71.9L637.3 73.5L637.3 75.3L635.7 74.4L632.9 73.3L633.1 72.1L634.5 72.1L636.3 72.4ZM652.5 77.7L654.1 78.1L656.2 78.4L657.1 78.8L654.9 79.0L652.5 78.6ZM671.8 77.7L670.8 78.8L669.2 79.9L668.1 79.4L668.5 78.6L670.2 78.1ZM651.7 70.1L653.3 71.0L654.1 72.4L652.5 71.5ZM660.6 75.9L659.9 76.8L660.5 76.6ZM657.3 69.4L657.6 70.1L656.5 69.9ZM616.0 68.0L616.2 69.4L614.9 69.2L614.9 68.5ZM752.9 128.0L754.9 129.8L755.9 132.1L755.4 134.1L753.6 134.9L752.5 133.4L752.4 131.2L752.7 129.4ZM807.1 109.0L807.8 110.0L806.8 111.6L805.2 112.6L803.7 111.5L804.5 109.8L806.1 109.2ZM826.5 99.0L827.0 100.6L826.1 103.5L825.3 105.6L824.4 104.2L824.2 102.3L825.3 100.4L825.8 99.4ZM843.2 81.4L844.6 82.2L845.0 83.7L843.9 86.7L842.9 87.5L842.0 86.7L842.1 84.8L841.3 83.9L840.9 82.7L842.1 82.0ZM848.5 80.5L849.8 81.2L849.3 82.2L848.0 82.7L846.8 83.7L845.9 82.4L846.6 81.2ZM861.0 64.3L861.9 64.7L862.2 66.6L862.9 68.9L862.1 71.7L861.2 72.8L861.0 74.8L860.5 76.8L860.8 77.5L859.9 78.6L859.0 79.0L858.9 78.1L858.0 78.6L857.3 79.7L856.2 79.9L854.4 79.7L853.9 80.5L851.9 82.2L850.9 80.7L850.9 79.7L848.7 79.9L847.3 80.3L845.7 80.7L843.4 81.4L843.7 80.3L845.2 79.4L846.4 78.1L847.8 77.9L849.6 77.7L851.0 77.5L852.3 77.7L852.5 76.4L853.7 74.8L854.6 73.5L854.1 74.6L854.8 75.1L856.4 74.4L857.3 72.8L858.5 71.2L859.4 69.4L859.2 67.8L859.2 66.4L859.9 65.0ZM862.8 54.5L864.0 56.0L865.4 57.5L867.0 58.2L868.8 57.5L869.5 59.7L867.4 60.7L866.0 60.9L865.3 63.1L862.6 61.6L861.2 62.4L861.3 63.6L860.1 64.3L859.0 62.6L860.1 60.7L861.7 59.9L862.4 57.5L862.2 55.2ZM863.8 29.8L865.1 32.5L865.3 36.9L866.1 41.2L867.0 44.5L865.1 45.3L864.0 48.0L864.9 50.6L865.6 51.6L863.8 53.2L862.9 51.4L863.1 48.5L863.1 45.3L863.1 41.2L862.4 37.5L862.8 34.0L863.3 31.6ZM875.0 54.5L873.1 55.7L871.8 57.0L873.4 56.2ZM870.6 57.2L869.2 58.5L869.7 58.7ZM888.5 40.3L886.6 41.7L886.9 42.6L888.2 41.7ZM902.9 14.2L901.2 16.2L902.1 16.6ZM854.9 27.3L856.2 28.5L854.8 28.9ZM835.4 82.1L836.1 82.4L835.2 82.8ZM838.6 96.0L837.7 97.2L837.5 96.8ZM825.3 111.8L827.7 112.0L828.3 114.5L827.0 116.7L826.7 118.5L827.0 120.0L828.6 120.7L829.7 120.4L830.6 121.8L831.1 122.9L829.7 122.2L827.7 120.7L825.6 120.9L824.9 119.4L824.0 118.9L823.5 116.7L824.4 115.9L824.5 113.9ZM824.5 121.3L826.0 121.5L826.5 123.1L825.6 123.5L824.9 122.2ZM822.9 125.1L823.3 126.7L821.3 128.5L818.9 130.5L819.6 129.4L821.5 127.6L822.4 126.2ZM827.4 124.4L829.3 124.9L828.5 126.5L827.2 126.7L827.4 124.9ZM829.7 126.0L830.1 126.7L829.5 129.1L828.3 128.4L828.8 126.7ZM830.9 125.5L830.8 127.1L829.7 128.5L830.2 127.3ZM831.5 122.9L833.3 123.5L834.0 125.6L832.7 125.8L832.4 124.4L831.5 123.6ZM831.7 124.9L832.7 125.5L833.1 127.3L832.4 127.3L831.7 126.0ZM830.9 127.5L832.0 127.5L831.7 128.4L830.6 128.2ZM833.6 128.0L835.0 129.4L835.6 132.1L834.9 134.3L833.8 133.9L833.4 135.5L832.5 134.8L830.9 133.2L830.6 131.9L828.8 132.5L827.6 133.2L827.6 131.8L829.0 130.9L830.1 130.2L831.3 130.9L832.4 129.6L833.3 129.4ZM779.9 135.5L783.8 136.2L785.3 138.0L786.9 139.6L789.0 141.6L791.3 142.8L793.6 144.6L794.7 146.0L796.1 147.3L798.6 149.6L798.9 151.2L798.8 153.0L798.6 155.8L797.5 156.0L796.1 155.1L794.0 153.5L792.2 151.9L790.6 150.1L789.5 148.3L788.5 146.4L787.2 144.8L786.1 142.8L784.4 141.4L782.9 139.8L781.2 137.8L779.9 136.4ZM798.9 156.0L800.7 156.2L803.0 156.7L804.3 157.6L806.9 157.8L807.7 156.9L808.9 157.6L810.9 157.8L812.3 159.2L813.9 159.2L814.1 161.0L811.7 160.3L809.1 160.3L806.4 159.8L804.3 159.2L802.0 159.2L799.8 158.5L798.1 157.6L798.6 156.9ZM814.1 159.9L816.0 159.9L815.8 161.0L814.2 160.5ZM816.9 160.1L818.5 160.1L819.9 159.9L821.9 160.3L821.9 161.2L819.4 161.6L817.1 161.4ZM823.7 160.3L826.5 160.3L828.8 159.9L828.8 161.2L826.1 161.4L823.7 161.2ZM822.1 162.3L823.8 162.3L825.3 163.4L824.2 163.7L822.4 162.8ZM835.4 160.5L836.6 160.5L835.0 161.6L832.7 162.5L830.2 163.9L830.1 163.4L831.5 162.1L833.6 160.8ZM818.1 133.0L819.6 133.4L820.6 135.2L822.4 136.6L820.3 137.8L819.4 139.3L820.3 141.1L821.7 143.4L819.9 144.1L819.4 146.9L817.6 149.1L817.3 151.2L816.7 152.6L814.4 152.8L813.2 151.5L810.5 151.4L808.7 151.5L806.6 150.7L806.1 148.7L804.8 146.9L804.3 144.6L804.5 142.7L805.3 141.9L807.3 142.7L808.4 141.9L808.7 140.3L811.4 139.8L813.0 137.8L815.5 136.6L816.7 135.2L817.8 133.9ZM833.1 142.7L831.7 143.7L829.2 144.1L826.5 143.7L824.7 144.1L823.7 145.5L823.5 146.9L822.1 149.1L821.9 151.5L822.9 151.9L822.8 155.3L824.4 155.1L824.5 152.3L825.3 150.3L826.5 151.9L826.7 154.0L828.8 154.0L828.5 152.6L827.9 151.5L826.7 149.4L827.0 148.3L829.5 147.1L829.7 146.6L827.0 147.1L825.3 147.1L824.4 144.8L826.1 144.6L829.2 144.8L831.5 144.6L832.7 143.4ZM837.9 141.6L839.3 143.7L839.3 144.8L838.1 146.9L837.5 145.1L837.0 143.7L837.3 142.8ZM838.1 150.5L840.7 150.5L843.0 151.4L841.3 151.9L838.1 151.5ZM834.7 151.0L836.5 151.0L835.9 152.3L834.7 151.9ZM843.2 146.9L845.7 146.2L848.4 146.9L849.1 149.6L851.0 151.4L852.8 149.9L854.4 148.5L857.1 148.2L859.4 149.6L861.2 150.1L863.8 151.4L866.9 152.4L869.7 154.0L870.4 155.3L872.9 156.2L873.3 157.4L872.2 158.5L874.0 159.9L875.9 161.6L877.5 163.5L878.6 164.5L875.4 163.7L873.1 163.4L871.5 161.9L870.1 159.8L867.4 159.4L865.3 160.7L864.4 161.9L861.2 161.7L859.2 160.1L857.3 160.1L857.3 158.5L856.4 156.5L854.6 154.8L852.3 153.5L849.3 152.8L846.8 152.4L845.7 150.7L847.8 150.1L846.1 149.4L843.9 148.2ZM881.1 153.0L880.9 154.4L878.6 155.5L876.8 156.5L874.3 156.5L874.3 155.5L877.2 155.3L879.5 154.2ZM878.6 150.1L881.1 151.5L882.5 153.7L881.6 153.0L879.8 151.2ZM885.3 154.8L886.6 156.2L887.5 157.6L886.2 157.1ZM894.1 159.8L896.0 160.8L896.5 162.3L894.9 163.0L894.2 161.9ZM859.4 181.8L860.8 177.1L862.1 173.4L862.2 169.7L862.6 167.0L863.5 164.8L864.2 164.8L865.1 167.0L865.8 169.7L867.4 171.6L869.0 174.3L873.6 181.8ZM830.9 181.8L830.1 175.2L833.1 172.5L835.9 170.6L838.9 172.3L840.7 172.1L841.6 169.7L842.9 167.7L844.8 167.4L846.6 167.4L845.5 165.7L847.8 166.6L850.5 167.0L853.7 167.5L852.3 169.7L851.6 172.5L854.9 174.3L858.5 177.1L859.4 181.8ZM842.1 165.7L844.1 165.7L843.4 166.6L842.1 166.4ZM698.1 167.0L699.4 169.4L700.3 173.0L697.3 181.8L689.1 181.8L689.4 174.7L693.2 173.4L695.7 170.6L696.7 169.4ZM798.1 148.3L800.2 149.4L800.0 150.8L798.6 149.9Z" fill="#8793a3"/><rect x="0" y="0" width="1221" height="0.600" fill="#f4f7fa"/><path d="M450.5 0V168M610.5 0V168M770.5 0V168M290 145.500H930" stroke="#fff" stroke-opacity=".06" stroke-width="1" fill="none"/><path d="M662.2 65.2L660.6 64.3L659.6 62.1L660.6 59.9L661.7 57.7L663.5 55.2L664.4 53.2L666.0 51.6L668.3 52.9L668.5 54.7L670.1 55.5L670.6 57.2L672.7 56.2L675.4 55.2L673.6 54.7L672.7 52.7L675.4 51.1L678.1 50.3L680.2 50.1L678.4 51.6L678.1 53.2L676.6 55.0L677.7 56.7L679.8 58.2L682.5 60.2L684.5 62.4L684.3 64.3L681.6 65.5L678.9 65.2L676.3 64.7L673.1 63.8L672.7 63.1L670.1 63.3L666.5 64.7L664.2 65.2ZM659.6 65.5L662.1 65.5L662.1 66.9L658.5 66.9ZM697.6 50.6L701.2 51.9L704.7 51.1L704.7 54.5L701.5 56.7L701.5 59.4L703.8 61.2L703.8 63.6L704.7 65.0L704.7 66.6L705.8 68.3L706.3 70.1L706.5 73.5L705.6 74.8L702.9 75.5L699.7 73.9L697.6 71.7L698.1 68.9L698.9 66.9L697.6 64.7L696.2 62.4L694.9 60.2L693.7 57.0L695.1 53.7ZM704.4 63.1L707.2 63.6L707.4 65.5L704.7 65.5ZM743.1 50.9L744.9 51.6L744.2 52.7L742.1 55.0L741.3 54.2L742.4 52.4ZM805.9 25.4L806.1 27.9L805.3 31.0L803.2 33.4L800.5 35.4L798.2 37.5L795.0 38.6L795.4 37.2L797.7 35.2L800.4 32.8L803.4 29.5L804.5 26.1ZM746.1 61.6L748.3 61.2L749.5 62.1L747.4 62.6ZM664.7 5.1L668.6 7.4L668.3 10.6L666.1 11.7L664.7 8.8ZM672.4 0.9L674.5 4.0L674.5 7.7L672.4 6.6ZM634.0 13.8L635.4 14.9L633.6 16.6L632.7 15.5ZM446.8 51.1L450.5 48.5L453.5 45.8L456.2 45.8L459.4 48.2L460.1 50.9L459.4 51.9L456.7 51.4L454.9 51.9L453.2 50.6L450.1 51.4ZM458.3 53.2L459.4 54.2L457.4 56.2L456.9 59.4L456.7 62.6L455.5 64.0L454.4 62.1L454.4 59.0L454.8 56.2L456.0 54.2ZM460.8 52.4L464.7 53.2L466.9 53.4L468.6 56.2L466.9 57.0L465.3 55.2L465.1 57.5L464.0 60.4L462.4 58.5L462.1 57.7L462.2 55.5L460.1 54.0ZM470.2 60.9L468.6 61.6L465.3 64.3L462.2 64.3L462.8 62.6L466.1 61.6L468.5 60.9ZM474.7 57.7L474.9 59.4L471.8 59.9L468.8 59.9L470.1 58.7L472.7 58.2ZM434.7 31.0L436.5 32.5L438.4 36.0L439.1 40.6L438.1 41.4L437.7 38.3L436.3 36.0L434.1 33.1ZM431.8 33.4L433.1 35.2L435.2 38.3L435.9 40.3L433.6 38.3L431.7 35.4ZM413.2 13.5L416.7 13.8L421.2 14.5L415.8 15.2L413.2 16.2ZM405.2 0.9L411.4 0.9L415.8 2.9L411.4 4.8L406.9 7.7L402.9 7.7L403.9 4.8ZM428.5 18.3L430.1 19.6L429.2 23.2L427.4 22.9L427.7 19.9ZM452.6 41.7L454.1 43.1L453.0 44.2L452.3 42.6ZM667.7 144.8L670.9 145.1L671.1 147.3L670.1 149.6L668.3 150.3L667.0 149.4L667.0 147.1ZM662.4 151.5L663.5 154.4L663.3 157.1L665.8 160.8L664.9 160.8L662.6 157.6L662.6 154.4L662.1 151.9ZM670.9 162.5L672.0 165.2L672.2 167.9L673.1 171.0L672.2 171.2L671.3 167.9L671.1 165.2L670.6 163.0ZM483.2 126.5L483.9 127.6L483.9 129.1L482.7 129.1L482.5 127.6ZM678.1 15.2L679.7 16.2L679.1 17.9L677.7 16.9ZM480.4 38.9L481.1 40.0L479.1 41.4L478.9 40.3Z" fill="#f4f7fa"/><defs><radialGradient id="glow"><stop offset="0.450" stop-color="#fff" stop-opacity=".55"/><stop offset="1" stop-color="#fff" stop-opacity="0"/></radialGradient></defs><circle cx="393.5" cy="48.7" r="7" fill="url(#glow)"/><circle cx="393.5" cy="48.7" r="4.1" fill="#e9edf3" fill-opacity=".75"/><circle cx="393.5" cy="48.7" r="2.8" fill="#2f6fbd"/><circle cx="444.6" cy="56.2" r="7" fill="url(#glow)"/><circle cx="444.6" cy="56.2" r="4.4" fill="#e9edf3" fill-opacity=".75"/><circle cx="444.6" cy="56.2" r="3.1" fill="#e0002f"/><circle cx="627.0" cy="46.8" r="7" fill="url(#glow)"/><circle cx="627.0" cy="46.8" r="4.4" fill="#e9edf3" fill-opacity=".75"/><circle cx="627.0" cy="46.8" r="3.1" fill="#e0002f"/><circle cx="786.0" cy="68.5" r="7" fill="url(#glow)"/><circle cx="786.0" cy="68.5" r="4.3" fill="#e9edf3" fill-opacity=".75"/><circle cx="786.0" cy="68.5" r="3.0" fill="#e0002f"/><circle cx="795.3" cy="143.2" r="7" fill="url(#glow)"/><circle cx="795.3" cy="143.2" r="4.0" fill="#e9edf3" fill-opacity=".75"/><circle cx="795.3" cy="143.2" r="2.7" fill="#2f6fbd"/><circle cx="394.3" cy="73.1" r="4.9" fill="#fff"/><circle cx="394.3" cy="73.1" r="5.95" fill="none" stroke="#2f66b3" stroke-width="2.7"/><path d="M394.3 67.15A5.95 5.95 0 0 1 400.12 71.86" fill="none" stroke="#d8002f" stroke-width="2.7"/><text x="394.3" y="75.5" text-anchor="middle" font-family="Liberation Sans, Arial, sans-serif" font-size="6.600" font-weight="700" fill="#484848">9</text><circle cx="424.4" cy="68.7" r="4.9" fill="#fff"/><circle cx="424.4" cy="68.7" r="5.95" fill="none" stroke="#2f66b3" stroke-width="2.7"/><path d="M424.4 62.75A5.95 5.95 0 0 1 424.40 74.65" fill="none" stroke="#d8002f" stroke-width="2.7"/><text x="424.4" y="71.1" text-anchor="middle" font-family="Liberation Sans, Arial, sans-serif" font-size="6.600" font-weight="700" fill="#484848">2</text><circle cx="469.4" cy="67.5" r="4.9" fill="#fff"/><circle cx="469.4" cy="67.5" r="5.95" fill="none" stroke="#2f66b3" stroke-width="2.7"/><path d="M469.4 61.55A5.95 5.95 0 0 1 469.40 73.45" fill="none" stroke="#d8002f" stroke-width="2.7"/><text x="469.4" y="69.9" text-anchor="middle" font-family="Liberation Sans, Arial, sans-serif" font-size="6.600" font-weight="700" fill="#484848">4</text><circle cx="603.1" cy="32.5" r="4.9" fill="#fff"/><circle cx="603.1" cy="32.5" r="5.95" fill="none" stroke="#2f66b3" stroke-width="2.7"/><path d="M603.1 26.55A5.95 5.95 0 0 1 608.25 35.48" fill="none" stroke="#d8002f" stroke-width="2.7"/><text x="603.1" y="34.9" text-anchor="middle" font-family="Liberation Sans, Arial, sans-serif" font-size="6.600" font-weight="700" fill="#484848">3</text></svg>
</div>
<div class="abs" style="left:1196px;top:151px;width:19px;height:38px;background:#fff;box-shadow:0 0 3px rgba(0,0,0,.3);border-radius:1px"><div class="abs" style="left:0;top:19px;width:19px;height:19px;background:#f4f4f4;border-top:1px solid #ddd"></div><div class="abs" style="left:5px;top:9px;width:9px;height:1.600px;background:#111"></div><div class="abs" style="left:8.700px;top:5.300px;width:1.600px;height:9px;background:#111"></div><div class="abs" style="left:6px;top:28px;width:7px;height:1px;background:#bbb"></div></div>
</div>
<div class="panel" style="left:51px;top:313px;width:1226px;height:198px">
<span class="picon"><svg viewBox="0 0 12 12" width="10.5" height="10.5"><rect x=".6" y=".6" width="4.6" height="4.6" fill="none" stroke="#1e73be" stroke-width="1"/><rect x="6.8" y="6.8" width="4.6" height="4.6" fill="none" stroke="#1e73be" stroke-width="1"/><path d="M7.2 1h2.2L11 3.2 9.4 5.4H7.2z" fill="#1e73be"/><path d="M4.8 6.6H2.6L1 8.8l1.6 2.2h2.2z" fill="#1e73be"/></svg></span><div class="ptitle">User Experience</div>
<div class="hline" style="top:28.19999999999999px"></div>
<div class="th" style="left:76px;top:35.80000000000001px">Drilldown</div>
<span class="ic" style="left:158.7px;top:32.30000000000001px"><svg viewBox="0 0 6 8" width="5.200" height="6.900"><path d="M.7 3.100 3 .9 5.300 3.100M.7 4.900 3 7.100 5.300 4.900" fill="none" stroke="#555" stroke-width="1.100"/></svg></span>
<div class="th" style="left:288px;top:35.80000000000001px;color:#222">Site</div>
<span class="ic" style="left:419.7px;top:32.30000000000001px"><svg viewBox="0 0 6 8" width="5.200" height="6.900"><path d="M.7 3.100 3 .9 5.300 3.100M.7 4.900 3 7.100 5.300 4.900" fill="none" stroke="#555" stroke-width="1.100"/></svg></span>
<div class="th" style="left:661px;top:35.80000000000001px;color:#222">User Experience Score</div>
<span class="ic" style="left:903.5px;top:34.19999999999999px"><svg viewBox="0 0 6 4" width="5" height="3.2"><path d="M0 3.6h6L3 .4z" fill="#777"/></svg></span>
<div class="th" style="left:1058.5px;top:35.80000000000001px;color:#222">User Experience Score</div>
<div class="hline" style="top:42.40px"></div>
<span class="ic" style="left:77.1px;top:49.08px"><svg class="ar" viewBox="0 0 8 9.6" width="8" height="9.600"><path d="M2 0h4v1.300H2zM2 1.700h4v1.300H2z" fill="#3f8fd6"/><path d="M2 3.300h4v2.200h2L4 9.600 0 5.500h2z" fill="#0f72c7"/></svg></span>
<div class="t lk" style="left:159.5px;top:49.08px">Eningen</div>
<div class="bar" style="left:419.8px;top:45.98px;width:474px"><i style="left:0.00px;width:35.40px;background:#d5002f"></i><i style="left:36.40px;width:35.40px;background:#d5002f"></i><i style="left:72.80px;width:35.40px;background:#d6d6d6"></i><i style="left:109.20px;width:35.40px;background:#d5002f"></i><i style="left:145.60px;width:35.40px;background:#d5002f"></i><i style="left:182.00px;width:35.40px;background:#d5002f"></i><i style="left:218.40px;width:36.40px;background:#d6d6d6"></i><i style="left:254.80px;width:35.40px;background:#d5002f"></i><i style="left:291.20px;width:35.40px;background:#d5002f"></i><i style="left:327.60px;width:35.40px;background:#d5002f"></i><i style="left:364.00px;width:35.40px;background:#d6d6d6"></i><i style="left:400.40px;width:35.40px;background:#d5002f"></i><i style="left:436.80px;width:36.40px;background:#d5002f"></i></div>
<div class="t num" style="left:905px;top:49.08px;color:#d8002f">0.4</div>
<div class="hline" style="top:55.76px"></div>
<span class="ic" style="left:77.1px;top:62.44px"><svg class="ar" viewBox="0 0 8 9.6" width="8" height="9.600"><path d="M2 0h4v1.300H2zM2 1.700h4v1.300H2z" fill="#3f8fd6"/><path d="M2 3.300h4v2.200h2L4 9.600 0 5.500h2z" fill="#0f72c7"/></svg></span>
<div class="t lk" style="left:159.5px;top:62.44px">Newbury</div>
<div class="bar" style="left:419.8px;top:59.34px;width:474px"><i style="left:0.00px;width:35.40px;background:#d5002f"></i><i style="left:36.40px;width:35.40px;background:#d5002f"></i><i style="left:72.80px;width:35.40px;background:#d5002f"></i><i style="left:109.20px;width:35.40px;background:#d5002f"></i><i style="left:145.60px;width:35.40px;background:#d6d6d6"></i><i style="left:182.00px;width:35.40px;background:#d6d6d6"></i><i style="left:218.40px;width:36.40px;background:#d5002f"></i><i style="left:254.80px;width:35.40px;background:#3b6fb4"></i><i style="left:291.20px;width:35.40px;background:#d5002f"></i><i style="left:327.60px;width:35.40px;background:#d5002f"></i><i style="left:364.00px;width:35.40px;background:#d5002f"></i><i style="left:400.40px;width:35.40px;background:#d5002f"></i><i style="left:436.80px;width:36.40px;background:#d6d6d6"></i></div>
<div class="t num" style="left:905px;top:62.44px;color:#d8002f">1.5</div>
<div class="hline" style="top:69.12px"></div>
<span class="ic" style="left:77.1px;top:75.80px"><svg class="ar" viewBox="0 0 8 9.6" width="8" height="9.600"><path d="M2 0h4v1.300H2zM2 1.700h4v1.300H2z" fill="#3f8fd6"/><path d="M2 3.300h4v2.200h2L4 9.600 0 5.500h2z" fill="#0f72c7"/></svg></span>
<div class="t lk" style="left:159.5px;top:75.80px">Suzhou</div>
<div class="bar" style="left:419.8px;top:72.70px;width:474px"><i style="left:0.00px;width:35.40px;background:#d6d6d6"></i><i style="left:36.40px;width:35.40px;background:#d6d6d6"></i><i style="left:72.80px;width:35.40px;background:#d5002f"></i><i style="left:109.20px;width:35.40px;background:#d5002f"></i><i style="left:145.60px;width:35.40px;background:#d5002f"></i><i style="left:182.00px;width:35.40px;background:#d5002f"></i><i style="left:218.40px;width:36.40px;background:#d5002f"></i><i style="left:254.80px;width:35.40px;background:#3b6fb4"></i><i style="left:291.20px;width:35.40px;background:#3b6fb4"></i><i style="left:327.60px;width:35.40px;background:#d6d6d6"></i><i style="left:364.00px;width:35.40px;background:#3b6fb4"></i><i style="left:400.40px;width:35.40px;background:#3b6fb4"></i><i style="left:436.80px;width:36.40px;background:#3b6fb4"></i></div>
<div class="t num" style="left:905px;top:75.80px;color:#d8002f">1.8</div>
<div class="hline" style="top:82.48px"></div>
<span class="ic" style="left:77.1px;top:89.16px"><svg class="ar" viewBox="0 0 8 9.6" width="8" height="9.600"><path d="M2 0h4v1.300H2zM2 1.700h4v1.300H2z" fill="#3f8fd6"/><path d="M2 3.300h4v2.200h2L4 9.600 0 5.500h2z" fill="#0f72c7"/></svg></span>
<div class="t lk" style="left:159.5px;top:89.16px">Eden Prairie</div>
<div class="bar" style="left:419.8px;top:86.06px;width:474px"><i style="left:0.00px;width:35.40px;background:#fdb730"></i><i style="left:36.40px;width:35.40px;background:#fdb730"></i><i style="left:72.80px;width:35.40px;background:#fdb730"></i><i style="left:109.20px;width:35.40px;background:#fdb730"></i><i style="left:145.60px;width:35.40px;background:#fdb730"></i><i style="left:182.00px;width:35.40px;background:#fdb730"></i><i style="left:218.40px;width:36.40px;background:#fdb730"></i><i style="left:254.80px;width:35.40px;background:#fdb730"></i><i style="left:291.20px;width:35.40px;background:#fdb730"></i><i style="left:327.60px;width:35.40px;background:#fdb730"></i><i style="left:364.00px;width:35.40px;background:#fdb730"></i><i style="left:400.40px;width:35.40px;background:#fdb730"></i><i style="left:436.80px;width:36.40px;background:#fdb730"></i></div>
<div class="t num" style="left:905px;top:89.16px;color:#e9a100">5.5</div>
<div class="hline" style="top:95.84px"></div>
<span class="ic" style="left:77.1px;top:102.52px"><svg class="ar" viewBox="0 0 8 9.6" width="8" height="9.600"><path d="M2 0h4v1.300H2zM2 1.700h4v1.300H2z" fill="#3f8fd6"/><path d="M2 3.300h4v2.200h2L4 9.600 0 5.500h2z" fill="#0f72c7"/></svg></span>
<div class="t lk" style="left:159.5px;top:102.52px;font-style:italic">Not Defined</div>
<div class="bar" style="left:419.8px;top:99.42px;width:474px"><i style="left:0.00px;width:35.40px;background:#fdb730"></i><i style="left:36.40px;width:35.40px;background:#fdb730"></i><i style="left:72.80px;width:35.40px;background:#fdb730"></i><i style="left:109.20px;width:35.40px;background:#fdb730"></i><i style="left:145.60px;width:35.40px;background:#fdb730"></i><i style="left:182.00px;width:35.40px;background:#fdb730"></i><i style="left:218.40px;width:36.40px;background:#fdb730"></i><i style="left:254.80px;width:35.40px;background:#fdb730"></i><i style="left:291.20px;width:35.40px;background:#fdb730"></i><i style="left:327.60px;width:35.40px;background:#fdb730"></i><i style="left:364.00px;width:35.40px;background:#fdb730"></i><i style="left:400.40px;width:35.40px;background:#fdb730"></i><i style="left:436.80px;width:36.40px;background:#fdb730"></i></div>
<div class="t num" style="left:905px;top:102.52px;color:#e9a100">5.5</div>
<div class="hline" style="top:109.20px"></div>
<span class="ic" style="left:77.1px;top:115.88px"><svg class="ar" viewBox="0 0 8 9.6" width="8" height="9.600"><path d="M2 0h4v1.300H2zM2 1.700h4v1.300H2z" fill="#3f8fd6"/><path d="M2 3.300h4v2.200h2L4 9.600 0 5.500h2z" fill="#0f72c7"/></svg></span>
<div class="t lk" style="left:159.5px;top:115.88px">Milpitas</div>
<div class="bar" style="left:419.8px;top:112.78px;width:474px"><i style="left:0.00px;width:35.40px;background:#fdb730"></i><i style="left:36.40px;width:35.40px;background:#fdb730"></i><i style="left:72.80px;width:35.40px;background:#3b6fb4"></i><i style="left:109.20px;width:35.40px;background:#3b6fb4"></i><i style="left:145.60px;width:35.40px;background:#3b6fb4"></i><i style="left:182.00px;width:35.40px;background:#3b6fb4"></i><i style="left:218.40px;width:36.40px;background:#3b6fb4"></i><i style="left:254.80px;width:35.40px;background:#3b6fb4"></i><i style="left:291.20px;width:35.40px;background:#3b6fb4"></i><i style="left:327.60px;width:35.40px;background:#3b6fb4"></i><i style="left:364.00px;width:35.40px;background:#3b6fb4"></i><i style="left:400.40px;width:35.40px;background:#3b6fb4"></i><i style="left:436.80px;width:36.40px;background:#3b6fb4"></i></div>
<div class="t num" style="left:905px;top:115.88px;color:#2c63a9">8.6</div>
<div class="hline" style="top:122.56px"></div>
<span class="ic" style="left:77.1px;top:129.24px"><svg class="ar" viewBox="0 0 8 9.6" width="8" height="9.600"><path d="M2 0h4v1.300H2zM2 1.700h4v1.300H2z" fill="#3f8fd6"/><path d="M2 3.300h4v2.200h2L4 9.600 0 5.500h2z" fill="#0f72c7"/></svg></span>
<div class="t lk" style="left:159.5px;top:129.24px">Sacramento</div>
<div class="bar" style="left:419.8px;top:126.14px;width:474px"><i style="left:0.00px;width:35.40px;background:#3b6fb4"></i><i style="left:36.40px;width:35.40px;background:#3b6fb4"></i><i style="left:72.80px;width:35.40px;background:#3b6fb4"></i><i style="left:109.20px;width:35.40px;background:#3b6fb4"></i><i style="left:145.60px;width:35.40px;background:#3b6fb4"></i><i style="left:182.00px;width:35.40px;background:#3b6fb4"></i><i style="left:218.40px;width:36.40px;background:#3b6fb4"></i><i style="left:254.80px;width:35.40px;background:#3b6fb4"></i><i style="left:291.20px;width:35.40px;background:#3b6fb4"></i><i style="left:327.60px;width:35.40px;background:#3b6fb4"></i><i style="left:364.00px;width:35.40px;background:#3b6fb4"></i><i style="left:400.40px;width:35.40px;background:#3b6fb4"></i><i style="left:436.80px;width:36.40px;background:#3b6fb4"></i></div>
<div class="t num" style="left:905px;top:129.24px;color:#2c63a9">8.9</div>
<div class="hline" style="top:135.92px"></div>
<span class="ic" style="left:77.1px;top:142.60px"><svg class="ar" viewBox="0 0 8 9.6" width="8" height="9.600"><path d="M2 0h4v1.300H2zM2 1.700h4v1.300H2z" fill="#3f8fd6"/><path d="M2 3.300h4v2.200h2L4 9.600 0 5.500h2z" fill="#0f72c7"/></svg></span>
<div class="t lk" style="left:159.5px;top:142.60px">Germantown</div>
<div class="bar" style="left:419.8px;top:139.50px;width:474px"><i style="left:0.00px;width:35.40px;background:#3b6fb4"></i><i style="left:36.40px;width:35.40px;background:#3b6fb4"></i><i style="left:72.80px;width:35.40px;background:#3b6fb4"></i><i style="left:109.20px;width:35.40px;background:#3b6fb4"></i><i style="left:145.60px;width:35.40px;background:#3b6fb4"></i><i style="left:182.00px;width:35.40px;background:#3b6fb4"></i><i style="left:218.40px;width:36.40px;background:#3b6fb4"></i><i style="left:254.80px;width:35.40px;background:#3b6fb4"></i><i style="left:291.20px;width:35.40px;background:#3b6fb4"></i><i style="left:327.60px;width:35.40px;background:#3b6fb4"></i><i style="left:364.00px;width:35.40px;background:#3b6fb4"></i><i style="left:400.40px;width:35.40px;background:#3b6fb4"></i><i style="left:436.80px;width:36.40px;background:#3b6fb4"></i></div>
<div class="t num" style="left:905px;top:142.60px;color:#2c63a9">9.1</div>
<div class="hline" style="top:149.28px"></div>
<span class="ic" style="left:77.1px;top:155.96px"><svg class="ar" viewBox="0 0 8 9.6" width="8" height="9.600"><path d="M2 0h4v1.300H2zM2 1.700h4v1.300H2z" fill="#3f8fd6"/><path d="M2 3.300h4v2.200h2L4 9.600 0 5.500h2z" fill="#0f72c7"/></svg></span>
<div class="t lk" style="left:159.5px;top:155.96px">Indianapolis</div>
<div class="bar" style="left:419.8px;top:152.86px;width:474px"><i style="left:0.00px;width:35.40px;background:#d6d6d6"></i><i style="left:36.40px;width:35.40px;background:#d6d6d6"></i><i style="left:72.80px;width:35.40px;background:#d6d6d6"></i><i style="left:109.20px;width:35.40px;background:#d6d6d6"></i><i style="left:145.60px;width:35.40px;background:#d6d6d6"></i><i style="left:182.00px;width:35.40px;background:#d6d6d6"></i><i style="left:218.40px;width:36.40px;background:#d6d6d6"></i><i style="left:254.80px;width:35.40px;background:#3b6fb4"></i><i style="left:291.20px;width:35.40px;background:#d6d6d6"></i><i style="left:327.60px;width:35.40px;background:#d6d6d6"></i><i style="left:364.00px;width:35.40px;background:#d6d6d6"></i><i style="left:400.40px;width:35.40px;background:#d6d6d6"></i><i style="left:436.80px;width:36.40px;background:#d6d6d6"></i></div>
<div class="t num" style="left:905px;top:155.96px;color:#2c63a9">9.3</div>
<div class="hline" style="top:162.64px"></div>
<span class="ic" style="left:77.1px;top:169.32px"><svg class="ar" viewBox="0 0 8 9.6" width="8" height="9.600"><path d="M2 0h4v1.300H2zM2 1.700h4v1.300H2z" fill="#3f8fd6"/><path d="M2 3.300h4v2.200h2L4 9.600 0 5.500h2z" fill="#0f72c7"/></svg></span>
<div class="t lk" style="left:159.5px;top:169.32px">Public Viavi IP Address</div>
<div class="bar" style="left:419.8px;top:166.22px;width:474px"><i style="left:0.00px;width:35.40px;background:#d6d6d6"></i><i style="left:36.40px;width:35.40px;background:#d6d6d6"></i><i style="left:72.80px;width:35.40px;background:#3b6fb4"></i><i style="left:109.20px;width:35.40px;background:#d6d6d6"></i><i style="left:145.60px;width:35.40px;background:#d6d6d6"></i><i style="left:182.00px;width:35.40px;background:#d6d6d6"></i><i style="left:218.40px;width:36.40px;background:#d6d6d6"></i><i style="left:254.80px;width:35.40px;background:#d6d6d6"></i><i style="left:291.20px;width:35.40px;background:#d6d6d6"></i><i style="left:327.60px;width:35.40px;background:#d6d6d6"></i><i style="left:364.00px;width:35.40px;background:#d6d6d6"></i><i style="left:400.40px;width:35.40px;background:#d6d6d6"></i><i style="left:436.80px;width:36.40px;background:#d6d6d6"></i></div>
<div class="t num" style="left:905px;top:169.32px;color:#2c63a9">9.5</div>
<div class="hline" style="top:176.00px"></div>
<span class="ic" style="left:77.1px;top:182.68px"><svg class="ar" viewBox="0 0 8 9.6" width="8" height="9.600"><path d="M2 0h4v1.300H2zM2 1.700h4v1.300H2z" fill="#3f8fd6"/><path d="M2 3.300h4v2.200h2L4 9.600 0 5.500h2z" fill="#0f72c7"/></svg></span>
<div class="t lk" style="left:159.5px;top:182.68px">Denver</div>
<div class="bar" style="left:419.8px;top:179.58px;width:474px"><i style="left:0.00px;width:35.40px;background:#3b6fb4"></i><i style="left:36.40px;width:35.40px;background:#3b6fb4"></i><i style="left:72.80px;width:35.40px;background:#3b6fb4"></i><i style="left:109.20px;width:35.40px;background:#3b6fb4"></i><i style="left:145.60px;width:35.40px;background:#3b6fb4"></i><i style="left:182.00px;width:35.40px;background:#3b6fb4"></i><i style="left:218.40px;width:36.40px;background:#3b6fb4"></i><i style="left:254.80px;width:35.40px;background:#3b6fb4"></i><i style="left:291.20px;width:35.40px;background:#3b6fb4"></i><i style="left:327.60px;width:35.40px;background:#3b6fb4"></i><i style="left:364.00px;width:35.40px;background:#3b6fb4"></i><i style="left:400.40px;width:35.40px;background:#3b6fb4"></i><i style="left:436.80px;width:36.40px;background:#3b6fb4"></i></div>
<div class="t num" style="left:905px;top:182.68px;color:#2c63a9">9.7</div>
<div class="hline" style="top:189.36px"></div>
<span class="ic" style="left:77.1px;top:196.04px"><svg class="ar" viewBox="0 0 8 9.6" width="8" height="9.600"><path d="M2 0h4v1.300H2zM2 1.700h4v1.300H2z" fill="#3f8fd6"/><path d="M2 3.300h4v2.200h2L4 9.600 0 5.500h2z" fill="#0f72c7"/></svg></span>
<div class="t lk" style="left:159.5px;top:196.04px">Edinburgh</div>
<div class="bar" style="left:419.8px;top:192.94px;width:474px"><i style="left:0.00px;width:35.40px;background:#3b6fb4"></i><i style="left:36.40px;width:35.40px;background:#3b6fb4"></i><i style="left:72.80px;width:35.40px;background:#3b6fb4"></i><i style="left:109.20px;width:35.40px;background:#3b6fb4"></i><i style="left:145.60px;width:35.40px;background:#3b6fb4"></i><i style="left:182.00px;width:35.40px;background:#3b6fb4"></i><i style="left:218.40px;width:36.40px;background:#3b6fb4"></i><i style="left:254.80px;width:35.40px;background:#3b6fb4"></i><i style="left:291.20px;width:35.40px;background:#3b6fb4"></i><i style="left:327.60px;width:35.40px;background:#3b6fb4"></i><i style="left:364.00px;width:35.40px;background:#3b6fb4"></i><i style="left:400.40px;width:35.40px;background:#3b6fb4"></i><i style="left:436.80px;width:36.40px;background:#3b6fb4"></i></div>
<div class="t num" style="left:905px;top:196.04px;color:#2c63a9">9.8</div>
<div class="sb" style="left:1211px;top:42px;width:12.5px;height:155px">
<svg class="sba" style="top:4px" viewBox="0 0 6 4" width="6.5" height="4"><path d="M0 3.7h6L3 .3z" fill="#888"/></svg>
<div class="sbt" style="top:14px;height:103px"></div>
<svg class="sba" style="bottom:4px" viewBox="0 0 6 4" width="6.5" height="4"><path d="M0 .3h6L3 3.7z" fill="#333"/></svg>
</div>
</div>
<div class="panel" style="left:51px;top:518px;width:609px;height:195px">
<span class="picon"><svg viewBox="0 0 12 12" width="10.5" height="10.5"><rect x=".6" y=".6" width="4.6" height="4.6" fill="none" stroke="#1e73be" stroke-width="1"/><rect x="6.8" y="6.8" width="4.6" height="4.6" fill="none" stroke="#1e73be" stroke-width="1"/><path d="M7.2 1h2.2L11 3.2 9.4 5.4H7.2z" fill="#1e73be"/><path d="M4.8 6.6H2.6L1 8.8l1.6 2.2h2.2z" fill="#1e73be"/></svg></span><div class="ptitle">Top Sites by Utilization</div>
<div class="hline" style="top:28.200000000000045px"></div>
<div class="th" style="left:78.5px;top:36px">Drilldown</div>
<span class="ic" style="left:162.7px;top:32.60000000000002px"><svg viewBox="0 0 6 8" width="5.200" height="6.900"><path d="M.7 3.100 3 .9 5.300 3.100M.7 4.900 3 7.100 5.300 4.900" fill="none" stroke="#555" stroke-width="1.100"/></svg></span>
<div class="th" style="left:295.5px;top:36px;color:#222">Site</div>
<span class="ic" style="left:430.6px;top:34.39999999999998px"><svg viewBox="0 0 6 4" width="5" height="3.2"><path d="M0 .4h6L3 3.6z" fill="#777"/></svg></span>
<div class="th" style="left:512.5px;top:36px;color:#222">Bits/sec</div>
<div class="hline" style="top:43.20px"></div>
<span class="ic" style="left:79.25px;top:49.88px"><svg class="ar" viewBox="0 0 8 9.6" width="8" height="9.600"><path d="M2 0h4v1.300H2zM2 1.700h4v1.300H2z" fill="#3f8fd6"/><path d="M2 3.300h4v2.200h2L4 9.600 0 5.500h2z" fill="#0f72c7"/></svg></span>
<div class="t lk" style="left:164px;top:49.88px">Eden Prairie</div>
<div class="t num red" style="left:431px;top:49.88px">59.28M</div>
<div class="hline" style="top:56.50px"></div>
<span class="ic" style="left:79.25px;top:63.18px"><svg class="ar" viewBox="0 0 8 9.6" width="8" height="9.600"><path d="M2 0h4v1.300H2zM2 1.700h4v1.300H2z" fill="#3f8fd6"/><path d="M2 3.300h4v2.200h2L4 9.600 0 5.500h2z" fill="#0f72c7"/></svg></span>
<div class="t lk" style="left:164px;top:63.18px;font-style:italic">Not Defined</div>
<div class="t num" style="left:431px;top:63.18px">38.323M</div>
<div class="hline" style="top:69.80px"></div>
<span class="ic" style="left:79.25px;top:76.48px"><svg class="ar" viewBox="0 0 8 9.6" width="8" height="9.600"><path d="M2 0h4v1.300H2zM2 1.700h4v1.300H2z" fill="#3f8fd6"/><path d="M2 3.300h4v2.200h2L4 9.600 0 5.500h2z" fill="#0f72c7"/></svg></span>
<div class="t lk" style="left:164px;top:76.48px">Santa Rosa</div>
<div class="t num" style="left:431px;top:76.48px">3.362M</div>
<div class="hline" style="top:83.10px"></div>
<span class="ic" style="left:79.25px;top:89.78px"><svg class="ar" viewBox="0 0 8 9.6" width="8" height="9.600"><path d="M2 0h4v1.300H2zM2 1.700h4v1.300H2z" fill="#3f8fd6"/><path d="M2 3.300h4v2.200h2L4 9.600 0 5.500h2z" fill="#0f72c7"/></svg></span>
<div class="t lk" style="left:164px;top:89.78px">Limerick Region</div>
<div class="t num" style="left:431px;top:89.78px">3.02M</div>
<div class="hline" style="top:96.40px"></div>
<span class="ic" style="left:79.25px;top:103.08px"><svg class="ar" viewBox="0 0 8 9.6" width="8" height="9.600"><path d="M2 0h4v1.300H2zM2 1.700h4v1.300H2z" fill="#3f8fd6"/><path d="M2 3.300h4v2.200h2L4 9.600 0 5.500h2z" fill="#0f72c7"/></svg></span>
<div class="t lk" style="left:164px;top:103.08px">Germantown</div>
<div class="t num" style="left:431px;top:103.08px">1.377M</div>
<div class="hline" style="top:109.70px"></div>
<span class="ic" style="left:79.25px;top:116.38px"><svg class="ar" viewBox="0 0 8 9.6" width="8" height="9.600"><path d="M2 0h4v1.300H2zM2 1.700h4v1.300H2z" fill="#3f8fd6"/><path d="M2 3.300h4v2.200h2L4 9.600 0 5.500h2z" fill="#0f72c7"/></svg></span>
<div class="t lk" style="left:164px;top:116.38px">Denver</div>
<div class="t num" style="left:431px;top:116.38px">85.163k</div>
<div class="hline" style="top:123.00px"></div>
<span class="ic" style="left:79.25px;top:129.68px"><svg class="ar" viewBox="0 0 8 9.6" width="8" height="9.600"><path d="M2 0h4v1.300H2zM2 1.700h4v1.300H2z" fill="#3f8fd6"/><path d="M2 3.300h4v2.200h2L4 9.600 0 5.500h2z" fill="#0f72c7"/></svg></span>
<div class="t lk" style="left:164px;top:129.68px">Bothell</div>
<div class="t num" style="left:431px;top:129.68px">19.329k</div>
<div class="hline" style="top:136.30px"></div>
<span class="ic" style="left:79.25px;top:142.98px"><svg class="ar" viewBox="0 0 8 9.6" width="8" height="9.600"><path d="M2 0h4v1.300H2zM2 1.700h4v1.300H2z" fill="#3f8fd6"/><path d="M2 3.300h4v2.200h2L4 9.600 0 5.500h2z" fill="#0f72c7"/></svg></span>
<div class="t lk" style="left:164px;top:142.98px">Milpitas</div>
<div class="t num" style="left:431px;top:142.98px">15.503k</div>
<div class="hline" style="top:149.60px"></div>
<span class="ic" style="left:79.25px;top:156.28px"><svg class="ar" viewBox="0 0 8 9.6" width="8" height="9.600"><path d="M2 0h4v1.300H2zM2 1.700h4v1.300H2z" fill="#3f8fd6"/><path d="M2 3.300h4v2.200h2L4 9.600 0 5.500h2z" fill="#0f72c7"/></svg></span>
<div class="t lk" style="left:164px;top:156.28px">Google DNS</div>
<div class="t num" style="left:431px;top:156.28px">10.937k</div>
<div class="hline" style="top:162.90px"></div>
<span class="ic" style="left:79.25px;top:169.58px"><svg class="ar" viewBox="0 0 8 9.6" width="8" height="9.600"><path d="M2 0h4v1.300H2zM2 1.700h4v1.300H2z" fill="#3f8fd6"/><path d="M2 3.300h4v2.200h2L4 9.600 0 5.500h2z" fill="#0f72c7"/></svg></span>
<div class="t lk" style="left:164px;top:169.58px">Sacramento</div>
<div class="t num" style="left:431px;top:169.58px">5.071k</div>
<div class="hline" style="top:176.20px"></div>
<span class="ic" style="left:79.25px;top:182.88px"><svg class="ar" viewBox="0 0 8 9.6" width="8" height="9.600"><path d="M2 0h4v1.300H2zM2 1.700h4v1.300H2z" fill="#3f8fd6"/><path d="M2 3.300h4v2.200h2L4 9.600 0 5.500h2z" fill="#0f72c7"/></svg></span>
<div class="t lk" style="left:164px;top:182.88px">Singapore</div>
<div class="t num" style="left:431px;top:182.88px">2.379k</div>
<div class="hline" style="top:189.50px"></div>
<span class="ic" style="left:79.25px;top:196.18px"><svg class="ar" viewBox="0 0 8 9.6" width="8" height="9.600"><path d="M2 0h4v1.300H2zM2 1.700h4v1.300H2z" fill="#3f8fd6"/><path d="M2 3.300h4v2.200h2L4 9.600 0 5.500h2z" fill="#0f72c7"/></svg></span>
<div class="t lk" style="left:164px;top:196.18px">Seattle</div>
<div class="t num" style="left:431px;top:196.18px">1.208k</div>
<div class="abs" style="left:0;top:191.79999999999995px;width:606px;height:3px;background:#fff"></div>
<div class="sb" style="left:594px;top:42.5px;width:11.5px;height:150px">
<svg class="sba" style="top:4px" viewBox="0 0 6 4" width="6.5" height="4"><path d="M0 3.7h6L3 .3z" fill="#888"/></svg>
<div class="sbt" style="top:14px;height:57px"></div>
<svg class="sba" style="bottom:4px" viewBox="0 0 6 4" width="6.5" height="4"><path d="M0 .3h6L3 3.7z" fill="#333"/></svg>
</div>
</div>
<div class="panel" style="left:666px;top:518px;width:608px;height:195px">
<span class="picon"><svg viewBox="0 0 12 12" width="10.5" height="10.5"><rect x=".6" y=".6" width="4.6" height="4.6" fill="none" stroke="#a3a3a3" stroke-width="1"/><rect x="6.8" y="6.8" width="4.6" height="4.6" fill="none" stroke="#a3a3a3" stroke-width="1"/><path d="M7.2 1h2.2L11 3.2 9.4 5.4H7.2z" fill="#a3a3a3"/><path d="M4.8 6.6H2.6L1 8.8l1.6 2.2h2.2z" fill="#a3a3a3"/></svg></span><div class="ptitle">Site Interfaces</div>
<span class="ic" style="left:590.5px;top:6.5px"><svg viewBox="0 0 12 11" width="11" height="10"><path d="M6 .3 11.8 10.6H.2z" fill="#f7941d"/><rect x="5.3" y="3.6" width="1.4" height="3.6" fill="#fff"/><rect x="5.3" y="8" width="1.4" height="1.4" fill="#fff"/></svg></span>
<div class="hline" style="top:28.200000000000045px"></div>
<div class="th" style="left:33px;top:36px">Drilldown</div>
<span class="ic" style="left:71.70000000000005px;top:32.60000000000002px"><svg viewBox="0 0 6 8" width="5.200" height="6.900"><path d="M.7 3.100 3 .9 5.300 3.100M.7 4.900 3 7.100 5.300 4.900" fill="none" stroke="#555" stroke-width="1.100"/></svg></span>
<div class="th" style="left:128px;top:36px;color:#222">Site</div>
<span class="ic" style="left:185.70000000000005px;top:32.60000000000002px"><svg viewBox="0 0 6 8" width="5.200" height="6.900"><path d="M.7 3.100 3 .9 5.300 3.100M.7 4.900 3 7.100 5.300 4.900" fill="none" stroke="#555" stroke-width="1.100"/></svg></span>
<div class="th" style="left:242px;top:36px;color:#222">Device</div>
<span class="ic" style="left:299px;top:32.60000000000002px"><svg viewBox="0 0 6 8" width="5.200" height="6.900"><path d="M.7 3.100 3 .9 5.300 3.100M.7 4.900 3 7.100 5.300 4.900" fill="none" stroke="#555" stroke-width="1.100"/></svg></span>
<div class="th" style="left:357px;top:36px;color:#222">Interface</div>
<span class="ic" style="left:442px;top:32.60000000000002px"><svg viewBox="0 0 6 8" width="5.200" height="6.900"><path d="M.7 3.100 3 .9 5.300 3.100M.7 4.900 3 7.100 5.300 4.900" fill="none" stroke="#555" stroke-width="1.100"/></svg></span>
<div class="th" style="left:482.5px;top:36px;color:#222">Utilization</div>
<span class="ic" style="left:523.8px;top:34.39999999999998px"><svg viewBox="0 0 6 4" width="5" height="3.2"><path d="M0 .4h6L3 3.6z" fill="#777"/></svg></span>
<div class="th" style="left:559.5px;top:36px;color:#222">Bits/sec</div>
<div class="hline" style="top:43.20px"></div>
<span class="ic" style="left:33.5px;top:49.88px"><svg class="ar" viewBox="0 0 8 9.6" width="8" height="9.600"><path d="M2 0h4v1.300H2zM2 1.700h4v1.300H2z" fill="#3f8fd6"/><path d="M2 3.300h4v2.200h2L4 9.600 0 5.500h2z" fill="#0f72c7"/></svg></span>
<div class="t lk" style="left:73px;top:49.88px">Eden Prairie</div>
<div class="t lk" style="left:187px;top:49.88px">MinDevErnie: GigaStor</div>
<div class="t lk" style="left:301px;top:49.88px">GigabitEthernet1/0/1</div>
<div class="t lk" style="left:444px;top:49.88px;color:#2c63a9">42.118</div>
<div class="t num red" style="left:525px;top:49.88px">51.344M</div>
<div class="hline" style="top:56.50px"></div>
<span class="ic" style="left:33.5px;top:63.18px"><svg class="ar" viewBox="0 0 8 9.6" width="8" height="9.600"><path d="M2 0h4v1.300H2zM2 1.700h4v1.300H2z" fill="#3f8fd6"/><path d="M2 3.300h4v2.200h2L4 9.600 0 5.500h2z" fill="#0f72c7"/></svg></span>
<div class="t lk" style="left:73px;top:63.18px;font-style:italic">Not Defined</div>
<div class="t lk" style="left:187px;top:63.18px">MinDevErnie: GigaStor</div>
<div class="t " style="left:301px;top:63.18px">-</div>
<div class="t lk" style="left:444px;top:63.18px;color:#2c63a9">1.694</div>
<div class="t num red" style="left:525px;top:63.18px">16.94M</div>
<div class="hline" style="top:69.80px"></div>
<span class="ic" style="left:33.5px;top:76.48px"><svg class="ar" viewBox="0 0 8 9.6" width="8" height="9.600"><path d="M2 0h4v1.300H2zM2 1.700h4v1.300H2z" fill="#3f8fd6"/><path d="M2 3.300h4v2.200h2L4 9.600 0 5.500h2z" fill="#0f72c7"/></svg></span>
<div class="t lk" style="left:73px;top:76.48px;font-style:italic">Not Defined</div>
<div class="t lk" style="left:187px;top:76.48px">172.21.40.250</div>
<div class="t lk" style="left:301px;top:76.48px">GigabitEthernet1/0/1</div>
<div class="t lk" style="left:444px;top:76.48px;color:#2c63a9">82.640</div>
<div class="t num" style="left:525px;top:76.48px">8.264M</div>
<div class="hline" style="top:83.10px"></div>
<span class="ic" style="left:33.5px;top:89.78px"><svg class="ar" viewBox="0 0 8 9.6" width="8" height="9.600"><path d="M2 0h4v1.300H2zM2 1.700h4v1.300H2z" fill="#3f8fd6"/><path d="M2 3.300h4v2.200h2L4 9.600 0 5.500h2z" fill="#0f72c7"/></svg></span>
<div class="t lk" style="left:73px;top:89.78px">Eden Prairie</div>
<div class="t lk" style="left:187px;top:89.78px">172.21.40.250</div>
<div class="t lk" style="left:301px;top:89.78px">GigabitEthernet1/0/3</div>
<div class="t lk" style="left:444px;top:89.78px;color:#2c63a9">5.164</div>
<div class="t num" style="left:525px;top:89.78px;color:#333">5.164M</div>
<div class="hline" style="top:96.40px"></div>
<span class="ic" style="left:33.5px;top:103.08px"><svg class="ar" viewBox="0 0 8 9.6" width="8" height="9.600"><path d="M2 0h4v1.300H2zM2 1.700h4v1.300H2z" fill="#3f8fd6"/><path d="M2 3.300h4v2.200h2L4 9.600 0 5.500h2z" fill="#0f72c7"/></svg></span>
<div class="t lk" style="left:73px;top:103.08px;font-style:italic">Not Defined</div>
<div class="t lk" style="left:187px;top:103.08px">172.21.40.250</div>
<div class="t lk" style="left:301px;top:103.08px">GigabitEthernet1/0/4</div>
<div class="t lk" style="left:444px;top:103.08px;color:#2c63a9">4.119</div>
<div class="t num" style="left:525px;top:103.08px">4.119M</div>
<div class="hline" style="top:109.70px"></div>
<span class="ic" style="left:33.5px;top:116.38px"><svg class="ar" viewBox="0 0 8 9.6" width="8" height="9.600"><path d="M2 0h4v1.300H2zM2 1.700h4v1.300H2z" fill="#3f8fd6"/><path d="M2 3.300h4v2.200h2L4 9.600 0 5.500h2z" fill="#0f72c7"/></svg></span>
<div class="t lk" style="left:73px;top:116.38px">Santa Rosa</div>
<div class="t lk" style="left:187px;top:116.38px">MinDevErnie: GigaStor</div>
<div class="t " style="left:301px;top:116.38px">-</div>
<div class="t lk" style="left:444px;top:116.38px;color:#2c63a9">0.341</div>
<div class="t num" style="left:525px;top:116.38px">3.362M</div>
<div class="hline" style="top:123.00px"></div>
<span class="ic" style="left:33.5px;top:129.68px"><svg class="ar" viewBox="0 0 8 9.6" width="8" height="9.600"><path d="M2 0h4v1.300H2zM2 1.700h4v1.300H2z" fill="#3f8fd6"/><path d="M2 3.300h4v2.200h2L4 9.600 0 5.500h2z" fill="#0f72c7"/></svg></span>
<div class="t lk" style="left:73px;top:129.68px;font-style:italic">Not Defined</div>
<div class="t lk" style="left:187px;top:129.68px">172.21.40.250</div>
<div class="t lk" style="left:301px;top:129.68px">GigabitEthernet1/0/2</div>
<div class="t lk" style="left:444px;top:129.68px;color:#2c63a9">29.462</div>
<div class="t num" style="left:525px;top:129.68px">2.946M</div>
<div class="hline" style="top:136.30px"></div>
<span class="ic" style="left:33.5px;top:142.98px"><svg class="ar" viewBox="0 0 8 9.6" width="8" height="9.600"><path d="M2 0h4v1.300H2zM2 1.700h4v1.300H2z" fill="#3f8fd6"/><path d="M2 3.300h4v2.200h2L4 9.600 0 5.500h2z" fill="#0f72c7"/></svg></span>
<div class="t lk" style="left:73px;top:142.98px;font-style:italic">Not Defined</div>
<div class="t lk" style="left:187px;top:142.98px">172.21.42.3</div>
<div class="t lk" style="left:301px;top:142.98px">GigabitEthernetTEST-221/0/1</div>
<div class="t lk" style="left:444px;top:142.98px;color:#2c63a9">1.937</div>
<div class="t num" style="left:525px;top:142.98px">1.937M</div>
<div class="hline" style="top:149.60px"></div>
<span class="ic" style="left:33.5px;top:156.28px"><svg class="ar" viewBox="0 0 8 9.6" width="8" height="9.600"><path d="M2 0h4v1.300H2zM2 1.700h4v1.300H2z" fill="#3f8fd6"/><path d="M2 3.300h4v2.200h2L4 9.600 0 5.500h2z" fill="#0f72c7"/></svg></span>
<div class="t lk" style="left:73px;top:156.28px;font-style:italic">Not Defined</div>
<div class="t lk" style="left:187px;top:156.28px">172.21.42.3</div>
<div class="t lk" style="left:301px;top:156.28px">GigabitEthernet1/0/2</div>
<div class="t lk" style="left:444px;top:156.28px;color:#2c63a9">1.869</div>
<div class="t num" style="left:525px;top:156.28px">1.869M</div>
<div class="hline" style="top:162.90px"></div>
<span class="ic" style="left:33.5px;top:169.58px"><svg class="ar" viewBox="0 0 8 9.6" width="8" height="9.600"><path d="M2 0h4v1.300H2zM2 1.700h4v1.300H2z" fill="#3f8fd6"/><path d="M2 3.300h4v2.200h2L4 9.600 0 5.500h2z" fill="#0f72c7"/></svg></span>
<div class="t lk" style="left:73px;top:169.58px">Germantown</div>
<div class="t lk" style="left:187px;top:169.58px">MinDevErnie: GigaStor</div>
<div class="t " style="left:301px;top:169.58px">-</div>
<div class="t lk" style="left:444px;top:169.58px;color:#2c63a9">0.137</div>
<div class="t num" style="left:525px;top:169.58px">1.328M</div>
<div class="hline" style="top:176.20px"></div>
<span class="ic" style="left:33.5px;top:182.88px"><svg class="ar" viewBox="0 0 8 9.6" width="8" height="9.600"><path d="M2 0h4v1.300H2zM2 1.700h4v1.300H2z" fill="#3f8fd6"/><path d="M2 3.300h4v2.200h2L4 9.600 0 5.500h2z" fill="#0f72c7"/></svg></span>
<div class="t lk" style="left:73px;top:182.88px">Limerick Region</div>
<div class="t lk" style="left:187px;top:182.88px">172.21.40.199</div>
<div class="t lk" style="left:301px;top:182.88px">4763</div>
<div class="t " style="left:444px;top:182.88px;color:#444">-</div>
<div class="t num" style="left:525px;top:182.88px">1.017M</div>
<div class="hline" style="top:189.50px"></div>
<span class="ic" style="left:33.5px;top:196.18px"><svg class="ar" viewBox="0 0 8 9.6" width="8" height="9.600"><path d="M2 0h4v1.300H2zM2 1.700h4v1.300H2z" fill="#3f8fd6"/><path d="M2 3.300h4v2.200h2L4 9.600 0 5.500h2z" fill="#0f72c7"/></svg></span>
<div class="t lk" style="left:73px;top:196.18px;font-style:italic">Not Defined</div>
<div class="t lk" style="left:187px;top:196.18px">172.21.40.199</div>
<div class="t lk" style="left:301px;top:196.18px">4764</div>
<div class="t " style="left:444px;top:196.18px;color:#444">-</div>
<div class="t num" style="left:525px;top:196.18px">0.982M</div>
<div class="abs" style="left:0;top:191.79999999999995px;width:606px;height:3px;background:#fff"></div>
<div class="sb" style="left:593.5px;top:42.5px;width:11.5px;height:150px">
<svg class="sba" style="top:4px" viewBox="0 0 6 4" width="6.5" height="4"><path d="M0 3.7h6L3 .3z" fill="#888"/></svg>
<div class="sbt" style="top:14px;height:11px"></div>
<svg class="sba" style="bottom:4px" viewBox="0 0 6 4" width="6.5" height="4"><path d="M0 .3h6L3 3.7z" fill="#333"/></svg>
</div>
</div>
<div class="abs tip" style="left:957px;top:400px;width:207px;height:230px;background:#fff;box-shadow:0 1px 6px rgba(0,0,0,.35);z-index:9;overflow:hidden">
<div class="abs" style="left:0;top:0;width:207px;height:20px;background:#1d1f29"></div>
<div class="t" style="left:6.500px;top:11px;font-size:9.700px;font-weight:700;color:#fff">Eden Prairie</div>
<svg class="abs" style="left:85px;top:26px" width="37" height="37" viewBox="-18.500 -18.500 37 37"><defs><clipPath id="gc"><rect x="-16" y="0" width="32" height="16"/></clipPath></defs><circle r="13.800" fill="#fcd888" clip-path="url(#gc)"/><circle r="16" fill="none" stroke="#fdb730" stroke-width="2.600"/><text x="0" y="5.800" text-anchor="middle" font-family="Liberation Sans, Arial, sans-serif" font-size="16.500" fill="#3c3c3c">5.5</text></svg>
<div class="t" style="left:103.500px;top:68.500px;font-size:8.250px;color:#444;transform:translateX(-50%)">User Experience Score</div>
<svg class="abs" style="left:3px;top:77px" width="26" height="26" viewBox="-13 -13 26 26"><circle r="11.500" fill="none" stroke="#f3c36b" stroke-width=".8"/><circle r="8.700" fill="#fdb730"/></svg>
<div class="t" style="left:36.500px;top:90px;font-size:9.600px;color:#444">Network</div>
<div class="abs" style="left:36px;top:99.500px;width:151px;height:1px;background:#6f96cd"></div>
<div class="t" style="left:36.500px;top:108.500px;font-size:7.500px;color:#333">Score Deductions</div>
<div class="t" style="left:49.300px;top:121.5px;font-size:7.600px;color:#666">Round-trip network delays</div>
<div class="abs" style="left:40.500px;top:121px;width:2.600px;height:2.600px;border-radius:50%;background:#333"></div>
<div class="t" style="left:49.300px;top:130.8px;font-size:7.600px;color:#666">Packet loss and retransmissions</div>
<div class="abs" style="left:40.500px;top:130.3px;width:2.600px;height:2.600px;border-radius:50%;background:#333"></div>
<div class="t" style="left:49.300px;top:140.2px;font-size:7.600px;color:#666">preventing connection setup</div>
<div class="t" style="left:49.300px;top:149.5px;font-size:7.600px;color:#666">Packet loss and retransmissions</div>
<div class="abs" style="left:40.500px;top:149px;width:2.600px;height:2.600px;border-radius:50%;background:#333"></div>
<div class="t" style="left:49.300px;top:158.9px;font-size:7.600px;color:#666">delaying connection setup</div>
<div class="t" style="left:49.300px;top:168.2px;font-size:7.600px;color:#666">Packet loss and retransmissions slowing</div>
<div class="abs" style="left:40.500px;top:167.7px;width:2.600px;height:2.600px;border-radius:50%;background:#333"></div>
<div class="t" style="left:49.300px;top:177.6px;font-size:7.600px;color:#666">data transfer</div>
<div class="t" style="left:49.300px;top:186.9px;font-size:7.600px;color:#666">Long data transfer times at slow speeds</div>
<div class="abs" style="left:40.500px;top:186.4px;width:2.600px;height:2.600px;border-radius:50%;background:#333"></div>
<div class="abs" style="left:12px;top:197px;width:10.500px;height:10.500px;border-radius:50%;background:#3b6fb4"></div>
<div class="t" style="left:36.500px;top:203px;font-size:9.600px;color:#444">Client</div>
<div class="abs" style="left:12px;top:222.500px;width:10.500px;height:10.500px;border-radius:50%;background:#3b6fb4"></div>
<div class="t" style="left:36.500px;top:231px;font-size:9.600px;color:#444">Server</div>
<div class="sb" style="left:192.3px;top:77px;width:13.5px;height:148px">
<svg class="sba" style="top:4px" viewBox="0 0 6 4" width="6.5" height="4"><path d="M0 3.7h6L3 .3z" fill="#888"/></svg>
<div class="sbt" style="top:12.5px;height:93px"></div>
<svg class="sba" style="bottom:4px" viewBox="0 0 6 4" width="6.5" height="4"><path d="M0 .3h6L3 3.7z" fill="#333"/></svg>
</div>
</div>
</body></html>
